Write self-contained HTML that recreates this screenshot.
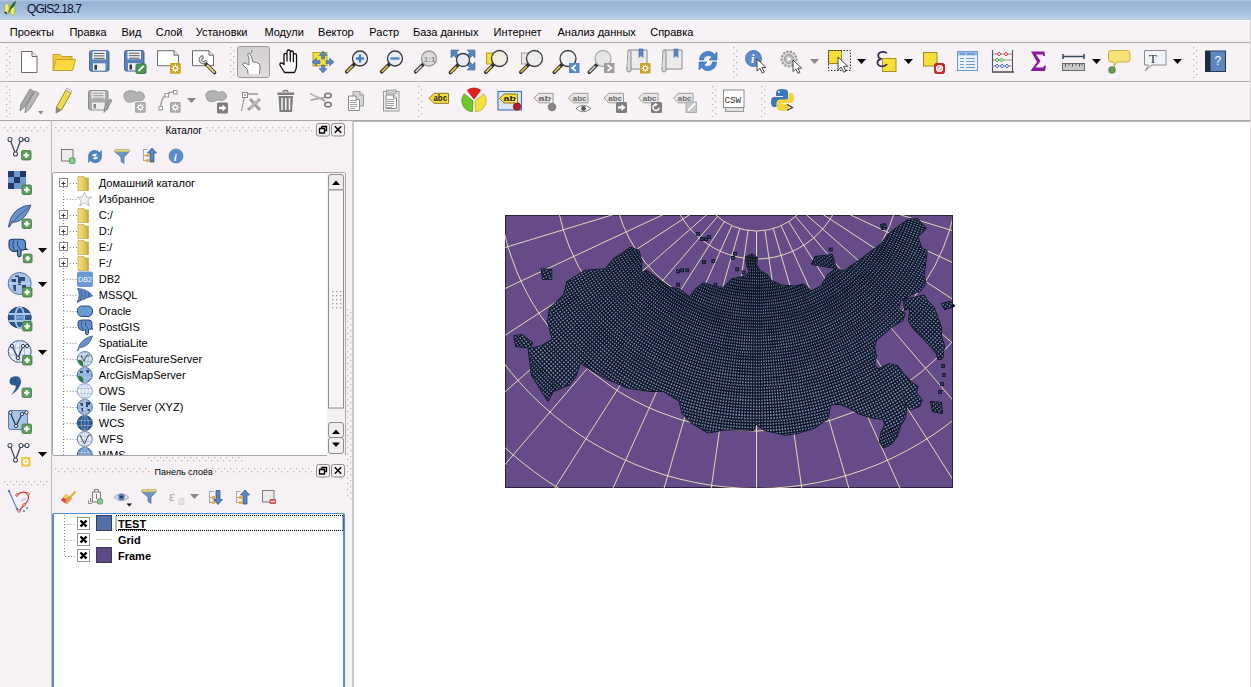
<!DOCTYPE html><html><head><meta charset="utf-8"><style>html,body{margin:0;padding:0;overflow:hidden;width:1251px;height:687px;background:#f6f1f5;position:relative}</style></head><body>
<div style="position:absolute;left:0px;top:0px;width:1251px;height:20px;background:linear-gradient(#b4c9e3 0px,#97b1d2 2px,#a3bcdc 10px,#b7d1ea 19px)"></div>
<svg style="position:absolute;left:0;top:0" width="24" height="20"><ellipse cx="6.8" cy="8.5" rx="2.3" ry="5" fill="#f0f070" stroke="#8a9a30" stroke-width="0.6"/><ellipse cx="12.6" cy="9.8" rx="2.3" ry="5.3" fill="#e8f060" stroke="#8a9a30" stroke-width="0.6"/><path d="M8,14 Q10,6 14,2 Q15.5,0.8 16,1.5 Q15,6 11,9 Q9.5,12 8,14Z" fill="#1f6a2a"/><path d="M4,12.5 L7,14.5 L6.5,11.5Z" fill="#1a2a1a"/></svg>
<div style="position:absolute;left:27px;top:3.14px;font-family:'Liberation Sans',sans-serif;font-size:12px;line-height:13.80px;white-space:nowrap;color:#000;color:#0a1030;letter-spacing:-0.95px">QGIS2.18.7</div>
<div style="position:absolute;left:0px;top:20px;width:1251px;height:1px;background:#ffffff"></div>
<div style="position:absolute;left:0px;top:21px;width:1251px;height:21px;background:#f7f2f6"></div>
<div style="position:absolute;left:0px;top:42px;width:1251px;height:1px;background:#aba7ab"></div>
<div style="position:absolute;left:9.8px;top:26.05px;font-family:'Liberation Sans',sans-serif;font-size:11px;line-height:12.65px;white-space:nowrap;color:#000;">Проекты</div>
<div style="position:absolute;left:69.4px;top:26.05px;font-family:'Liberation Sans',sans-serif;font-size:11px;line-height:12.65px;white-space:nowrap;color:#000;">Правка</div>
<div style="position:absolute;left:121.5px;top:26.05px;font-family:'Liberation Sans',sans-serif;font-size:11px;line-height:12.65px;white-space:nowrap;color:#000;">Вид</div>
<div style="position:absolute;left:155.7px;top:26.05px;font-family:'Liberation Sans',sans-serif;font-size:11px;line-height:12.65px;white-space:nowrap;color:#000;">Слой</div>
<div style="position:absolute;left:195.7px;top:26.05px;font-family:'Liberation Sans',sans-serif;font-size:11px;line-height:12.65px;white-space:nowrap;color:#000;">Установки</div>
<div style="position:absolute;left:264.4px;top:26.05px;font-family:'Liberation Sans',sans-serif;font-size:11px;line-height:12.65px;white-space:nowrap;color:#000;">Модули</div>
<div style="position:absolute;left:318.1px;top:26.05px;font-family:'Liberation Sans',sans-serif;font-size:11px;line-height:12.65px;white-space:nowrap;color:#000;">Вектор</div>
<div style="position:absolute;left:369.3px;top:26.05px;font-family:'Liberation Sans',sans-serif;font-size:11px;line-height:12.65px;white-space:nowrap;color:#000;">Растр</div>
<div style="position:absolute;left:413px;top:26.05px;font-family:'Liberation Sans',sans-serif;font-size:11px;line-height:12.65px;white-space:nowrap;color:#000;">База данных</div>
<div style="position:absolute;left:493.5px;top:26.05px;font-family:'Liberation Sans',sans-serif;font-size:11px;line-height:12.65px;white-space:nowrap;color:#000;">Интернет</div>
<div style="position:absolute;left:557.5px;top:26.05px;font-family:'Liberation Sans',sans-serif;font-size:11px;line-height:12.65px;white-space:nowrap;color:#000;">Анализ данных</div>
<div style="position:absolute;left:650.2px;top:26.05px;font-family:'Liberation Sans',sans-serif;font-size:11px;line-height:12.65px;white-space:nowrap;color:#000;">Справка</div>
<div style="position:absolute;left:0px;top:43px;width:1251px;height:38px;background:#f7f2f6"></div>
<div style="position:absolute;left:0px;top:81px;width:1251px;height:1px;background:#b3afb3"></div>
<div style="position:absolute;left:0px;top:82px;width:1251px;height:38px;background:#f7f2f6"></div>
<div style="position:absolute;left:0px;top:120px;width:1251px;height:1px;background:#a9a5a9"></div>
<div style="position:absolute;left:1250px;top:20px;width:1px;height:667px;background:#d6d2d6"></div>
<svg style="position:absolute;left:6px;top:47px" width="5" height="31"><defs><pattern id="dv6_47" width="5" height="6" patternUnits="userSpaceOnUse"><rect x="0" y="0" width="1.3" height="1.3" fill="#b9b5b9"/><rect x="3" y="3" width="1.3" height="1.3" fill="#b9b5b9"/></pattern></defs><rect width="5" height="31" fill="url(#dv6_47)"/></svg>
<svg style="position:absolute;left:230px;top:47px" width="5" height="31"><defs><pattern id="dv230_47" width="5" height="6" patternUnits="userSpaceOnUse"><rect x="0" y="0" width="1.3" height="1.3" fill="#b9b5b9"/><rect x="3" y="3" width="1.3" height="1.3" fill="#b9b5b9"/></pattern></defs><rect width="5" height="31" fill="url(#dv230_47)"/></svg>
<div style="position:absolute;left:236.5px;top:46px;width:33px;height:32px;background:linear-gradient(#d3d0d3,#dedade);border:1px solid #9d999d;border-radius:3px;box-sizing:border-box"></div>
<svg style="position:absolute;left:733px;top:47px" width="5" height="31"><defs><pattern id="dv733_47" width="5" height="6" patternUnits="userSpaceOnUse"><rect x="0" y="0" width="1.3" height="1.3" fill="#b9b5b9"/><rect x="3" y="3" width="1.3" height="1.3" fill="#b9b5b9"/></pattern></defs><rect width="5" height="31" fill="url(#dv733_47)"/></svg>
<svg style="position:absolute;left:810px;top:59px" width="9" height="5"><path d="M0,0 H9 L4.5,5Z" fill="#8a868a"/></svg>
<svg style="position:absolute;left:857px;top:59px" width="9" height="5"><path d="M0,0 H9 L4.5,5Z" fill="#000"/></svg>
<svg style="position:absolute;left:904px;top:59px" width="9" height="5"><path d="M0,0 H9 L4.5,5Z" fill="#000"/></svg>
<svg style="position:absolute;left:1091.5px;top:59px" width="9" height="5"><path d="M0,0 H9 L4.5,5Z" fill="#000"/></svg>
<svg style="position:absolute;left:1173px;top:59px" width="9" height="5"><path d="M0,0 H9 L4.5,5Z" fill="#000"/></svg>
<svg style="position:absolute;left:1193px;top:47px" width="5" height="31"><defs><pattern id="dv1193_47" width="5" height="6" patternUnits="userSpaceOnUse"><rect x="0" y="0" width="1.3" height="1.3" fill="#b9b5b9"/><rect x="3" y="3" width="1.3" height="1.3" fill="#b9b5b9"/></pattern></defs><rect width="5" height="31" fill="url(#dv1193_47)"/></svg>
<svg style="position:absolute;left:6px;top:86px" width="5" height="31"><defs><pattern id="dv6_86" width="5" height="6" patternUnits="userSpaceOnUse"><rect x="0" y="0" width="1.3" height="1.3" fill="#b9b5b9"/><rect x="3" y="3" width="1.3" height="1.3" fill="#b9b5b9"/></pattern></defs><rect width="5" height="31" fill="url(#dv6_86)"/></svg>
<svg style="position:absolute;left:38px;top:111px" width="5.5" height="3.5"><path d="M0,0 H5.5 L2.75,3.5Z" fill="#8a868a"/></svg>
<svg style="position:absolute;left:187px;top:98px" width="9" height="5"><path d="M0,0 H9 L4.5,5Z" fill="#8a868a"/></svg>
<svg style="position:absolute;left:418px;top:86px" width="5" height="31"><defs><pattern id="dv418_86" width="5" height="6" patternUnits="userSpaceOnUse"><rect x="0" y="0" width="1.3" height="1.3" fill="#b9b5b9"/><rect x="3" y="3" width="1.3" height="1.3" fill="#b9b5b9"/></pattern></defs><rect width="5" height="31" fill="url(#dv418_86)"/></svg>
<svg style="position:absolute;left:712px;top:86px" width="5" height="31"><defs><pattern id="dv712_86" width="5" height="6" patternUnits="userSpaceOnUse"><rect x="0" y="0" width="1.3" height="1.3" fill="#b9b5b9"/><rect x="3" y="3" width="1.3" height="1.3" fill="#b9b5b9"/></pattern></defs><rect width="5" height="31" fill="url(#dv712_86)"/></svg>
<svg style="position:absolute;left:761px;top:86px" width="5" height="31"><defs><pattern id="dv761_86" width="5" height="6" patternUnits="userSpaceOnUse"><rect x="0" y="0" width="1.3" height="1.3" fill="#b9b5b9"/><rect x="3" y="3" width="1.3" height="1.3" fill="#b9b5b9"/></pattern></defs><rect width="5" height="31" fill="url(#dv761_86)"/></svg>
<svg style="position:absolute;left:0;top:0" width="1251" height="125"><g transform="translate(20,49)"><path d="M1.5,2.5H12.0L17.0,7.5V23.5H1.5Z" fill="#fff" stroke="#6b6b6b"/><path d="M12.0,2.5V7.5H17.0" fill="#e8e8e8" stroke="#6b6b6b"/></g><g transform="translate(52,49)"><path d="M1,21.5V5.5h7l2,2h10v4" fill="#efca36" stroke="#c4a12c"/><path d="M1,21.5L4,10.5H23.5L20.5,21.5Z" fill="#fbd83e" stroke="#c4a12c"/></g><g transform="translate(88,49)"><rect x="1.5" y="1.7" width="19.5" height="20.5" rx="2" fill="#5b82b6" stroke="#45679a"/><rect x="4.5" y="2.2" width="13.5" height="8.2" fill="#f4f4f4"/><path d="M6,4.4h10.5M6,6.9h10.5M6,9.399999999999999h10.5" stroke="#555" stroke-width="1"/><rect x="5" y="14.3" width="12.5" height="7.4" fill="#eceff2"/><rect x="6.5" y="15.8" width="2.5" height="4.9" fill="#333"/></g><g transform="translate(123,49)"><rect x="1.5" y="1.5" width="19.5" height="20.5" rx="2" fill="#5b82b6" stroke="#45679a"/><rect x="4.5" y="2" width="13.5" height="8.2" fill="#f4f4f4"/><path d="M6,4.2h10.5M6,6.7h10.5M6,9.2h10.5" stroke="#555" stroke-width="1"/><rect x="5" y="14.1" width="12.5" height="7.4" fill="#eceff2"/><rect x="6.5" y="15.6" width="2.5" height="4.9" fill="#333"/><rect x="13" y="15" width="10" height="9.5" rx="1.5" fill="#4f9457" stroke="#3d7a45"/><path d="M15.5,22 L20.8,16.8" stroke="#fff" stroke-width="1.8"/></g><g transform="translate(156,49)"><path d="M1.5,1.7H18L22.5,6.2V16.7H1.5Z" fill="#fff" stroke="#6b6b6b"/><path d="M18,1.7V6.2H22.5" fill="#e8e8e8" stroke="#6b6b6b"/><rect x="14" y="14" width="10.7" height="10.7" rx="1.2" fill="#c9a41e"/><circle cx="19.35" cy="19.35" r="2" fill="none" stroke="#fff" stroke-width="1.1"/><path d="M19.35,15.5v2M19.35,23.2v-2M15.5,19.35h2M23.2,19.35h-2M16.5,16.5l1.4,1.4M22.2,22.2l-1.4,-1.4M22.2,16.5l-1.4,1.4M16.5,22.2l1.4,-1.4" stroke="#fff" stroke-width="1"/></g><g transform="translate(191,49)"><path d="M1.5,1.7H18L22.5,6.2V16.7H1.5Z" fill="#fff" stroke="#6b6b6b"/><path d="M18,1.7V6.2H22.5" fill="#e8e8e8" stroke="#6b6b6b"/><path d="M15,15 L23.5,23.5" stroke="#333" stroke-width="3.6" stroke-linecap="round"/><path d="M16.5,16.5 L23,23" stroke="#e5d37a" stroke-width="2" stroke-linecap="round"/><path d="M16,12.5 A4.2,4.2 0 1,1 11.5,6.5 L12.5,9 A1.8,1.8 0 1,0 14.5,11 Z" fill="#ddd" stroke="#555" stroke-width="0.9"/></g><g transform="translate(240,49)"><path d="M8,25 L7.5,20.5 L2.5,15.5 L4,13.5 L9,16 L9,9 L7.5,5 L9.5,4 L11.5,8 L13,13 L16.5,13.5 L19.5,15 L20,19 L19.5,25" fill="#fff" stroke="#7a7a7a" stroke-width="1"/><path d="M5,13 L2.5,16 M11,4 L12.5,1" stroke="#777" stroke-width="0.9"/></g><g transform="translate(278,49)"><path d="M6.5,23.5 L2.5,17 Q1,14.5 3,14 Q4.5,13.8 6,15.5 V6 Q6,4.3 7.5,4.3 Q9,4.3 9,6 V12 V2.8 Q9,1 10.7,1 Q12.3,1 12.3,2.8 V12 V3.5 Q12.3,2 13.8,2 Q15.4,2 15.4,3.5 V12.5 V6 Q15.4,4.6 16.9,4.6 Q18.5,4.6 18.5,6 V16.5 Q18.5,20.5 16.5,23.5Z" fill="#fff" stroke="#111" stroke-width="1.3" stroke-linejoin="round"/></g><g transform="translate(311,49)"><rect x="2" y="3.5" width="14" height="13.5" fill="#f7df3a" stroke="#b59c25"/><g fill="#5a87c4" stroke="#41689c" stroke-width="0.6"><path d="M12,2 L16,6.5 H13.5 V10 H10.5 V6.5 H8Z"/><path d="M12,24 L16,19.5 H13.5 V16 H10.5 V19.5 H8Z"/><path d="M1,13 L5.5,9 V11.5 H9 V14.5 H5.5 V17Z"/><path d="M23,13 L18.5,9 V11.5 H15 V14.5 H18.5 V17Z"/></g></g><g transform="translate(345,49)"><path d="M9.7,14.8 L1.7,22.8" stroke="#2a2a2a" stroke-width="3.6" stroke-linecap="round"/><path d="M7.2,17.3 L2.2,22.3" stroke="#e3c54a" stroke-width="1.8" stroke-linecap="round"/><circle cx="15" cy="9.5" r="7.5" fill="#e8ecf0" stroke="#3a3a3a" stroke-width="1.3"/><path d="M11,9.5h8M15,5.5v8" stroke="#4a7cc0" stroke-width="2.3"/></g><g transform="translate(380,49)"><path d="M9.7,14.8 L1.7,22.8" stroke="#2a2a2a" stroke-width="3.6" stroke-linecap="round"/><path d="M7.2,17.3 L2.2,22.3" stroke="#e3c54a" stroke-width="1.8" stroke-linecap="round"/><circle cx="15" cy="9.5" r="7.5" fill="#e8ecf0" stroke="#3a3a3a" stroke-width="1.3"/><path d="M10.5,9.5h9" stroke="#4a7cc0" stroke-width="2.3"/></g><g transform="translate(414,49)"><path d="M9.7,14.8 L1.7,22.8" stroke="#2a2a2a" stroke-width="3.6" stroke-linecap="round"/><path d="M7.2,17.3 L2.2,22.3" stroke="#cfcfcf" stroke-width="1.8" stroke-linecap="round"/><circle cx="15" cy="9.5" r="7.5" fill="#dcdcdc" stroke="#9a9a9a" stroke-width="1.3"/><text x="9.8" y="12.5" font-family="Liberation Sans" font-weight="bold" font-size="8" fill="#8a8a8a">1:1</text></g><g transform="translate(450,49)"><g fill="#5a87c4" stroke="#3f6aa4" stroke-width="0.6"><path d="M1,1h8l-2.5,2.5l3,3l-3,3l-3,-3l-2.5,2.5z"/><path d="M25,1h-8l2.5,2.5l-3,3l3,3l3,-3l2.5,2.5z"/><path d="M25,21h-8l2.5,-2.5l-3,-3l3,-3l3,3l2.5,-2.5z"/></g><path d="M8.4,15.6 L0.4,23.6" stroke="#2a2a2a" stroke-width="3.6" stroke-linecap="round"/><path d="M5.9,18.1 L0.9,23.1" stroke="#e3c54a" stroke-width="1.8" stroke-linecap="round"/><circle cx="13" cy="11" r="6.5" fill="#e8ecf0" stroke="#3a3a3a" stroke-width="1.3"/></g><g transform="translate(485,49)"><rect x="1.5" y="4" width="8" height="11" fill="#f7df3a" stroke="#b59c25"/><path d="M8.8,15.2 L0.8,23.2" stroke="#2a2a2a" stroke-width="3.6" stroke-linecap="round"/><path d="M6.3,17.7 L1.3,22.7" stroke="#e3c54a" stroke-width="1.8" stroke-linecap="round"/><circle cx="14.5" cy="9.5" r="8" fill="#efeee0" stroke="#3a3a3a" stroke-width="1.3"/></g><g transform="translate(520,49)"><rect x="1.5" y="4" width="8" height="11" fill="#e8e8e8" stroke="#9a9a9a"/><path d="M8.8,15.2 L0.8,23.2" stroke="#2a2a2a" stroke-width="3.6" stroke-linecap="round"/><path d="M6.3,17.7 L1.3,22.7" stroke="#e3c54a" stroke-width="1.8" stroke-linecap="round"/><circle cx="14.5" cy="9.5" r="8" fill="#ececec" stroke="#3a3a3a" stroke-width="1.3"/></g><g transform="translate(555,49)"><path d="M7.3,15.2 L-0.7,23.2" stroke="#2a2a2a" stroke-width="3.6" stroke-linecap="round"/><path d="M4.8,17.7 L-0.2,22.7" stroke="#e3c54a" stroke-width="1.8" stroke-linecap="round"/><circle cx="13" cy="9.5" r="8" fill="#eef0f2" stroke="#3a3a3a" stroke-width="1.3"/><rect x="14" y="14" width="10.5" height="10" fill="#5a87c4"/><path d="M21,16 L17,19 L21,22" fill="none" stroke="#fff" stroke-width="1.6"/></g><g transform="translate(590,49)"><path d="M7.3,15.2 L-0.7,23.2" stroke="#2a2a2a" stroke-width="3.6" stroke-linecap="round"/><path d="M4.8,17.7 L-0.2,22.7" stroke="#d0d0d0" stroke-width="1.8" stroke-linecap="round"/><circle cx="13" cy="9.5" r="8" fill="#e6e6e6" stroke="#a8a8a8" stroke-width="1.3"/><rect x="14" y="14" width="10.5" height="10" fill="#9c9c9c"/><path d="M17.5,16 L21.5,19 L17.5,22" fill="none" stroke="#fff" stroke-width="1.6"/></g><g transform="translate(626,49)"><path d="M2,3 Q1,1 3,1 H21 V20 H4 Q1,20 1,18Z" fill="#ebebeb" stroke="#8a8a8a"/><path d="M3,1 Q5,1 5,3 V21 Q5,23 3,23 Q1,23 1,21 V18" fill="#dcdcdc" stroke="#8a8a8a"/><path d="M13,0 h4 v8.5 l-2,-2 l-2,2z" fill="#5a87c4" stroke="#3f6aa4" stroke-width="0.6"/><rect x="14" y="14" width="10.5" height="10.5" rx="1.2" fill="#c9a41e"/><circle cx="19.25" cy="19.25" r="2" fill="none" stroke="#fff" stroke-width="1.1"/><path d="M19.25,15.5v2M19.25,23.0v-2M15.5,19.25h2M23.0,19.25h-2M16.5,16.5l1.4,1.4M22.0,22.0l-1.4,-1.4M22.0,16.5l-1.4,1.4M16.5,22.0l1.4,-1.4" stroke="#fff" stroke-width="1"/></g><g transform="translate(661,49)"><path d="M2,3 Q1,1 3,1 H21 V20 H4 Q1,20 1,18Z" fill="#ebebeb" stroke="#8a8a8a"/><path d="M3,1 Q5,1 5,3 V21 Q5,23 3,23 Q1,23 1,21 V18" fill="#dcdcdc" stroke="#8a8a8a"/><path d="M13,0 h4 v8.5 l-2,-2 l-2,2z" fill="#5a87c4" stroke="#3f6aa4" stroke-width="0.6"/></g><g transform="translate(696,49)"><path d="M3.5,11 A8.5,8.5 0 0,1 18.5,5.5 L21,3 V11 H13 L16,8 A5,5 0 0,0 7.5,11Z" fill="#4a86cc" stroke="#356aa8" stroke-width="0.6"/><path d="M20.5,13 A8.5,8.5 0 0,1 5.5,18.5 L3,21 V13 H11 L8,16 A5,5 0 0,0 16.5,13Z" fill="#4a86cc" stroke="#356aa8" stroke-width="0.6"/></g><g transform="translate(744,49)"><circle cx="9.5" cy="9.5" r="8" fill="#5b8bc9" stroke="#3f6aa4" stroke-width="0.8"/><text x="7" y="14" font-family="Liberation Serif" font-style="italic" font-weight="bold" font-size="12" fill="#fff">i</text><path d="M13,10 l0,12.100000000000001 l2.8600000000000003,-2.75 l2.4200000000000004,4.620000000000001 l1.9800000000000002,-0.9900000000000001 l-2.3100000000000005,-4.51 l3.9600000000000004,0z" fill="#fff" stroke="#333" stroke-width="0.9" stroke-linejoin="round"/></g><g transform="translate(779,49)"><circle cx="10" cy="10" r="7.5" fill="#d8d8d8" stroke="#9a9a9a" stroke-width="2.2" stroke-dasharray="2.2,1.4"/><circle cx="10" cy="10" r="4.5" fill="#bdbdbd" stroke="#9a9a9a"/><path d="M8.5,7.5 L12.5,10 L8.5,12.5z" fill="#fff"/><path d="M14,11 l0,11.55 l2.7300000000000004,-2.625 l2.3100000000000005,4.41 l1.8900000000000001,-0.9450000000000001 l-2.205,-4.305 l3.7800000000000002,0z" fill="#fff" stroke="#333" stroke-width="0.9" stroke-linejoin="round"/></g><g transform="translate(827,49)"><rect x="1.5" y="1.5" width="13" height="13" fill="#f7df3a" stroke="#9a8a2a"/><rect x="1.5" y="1.5" width="22" height="20" fill="none" stroke="#333" stroke-dasharray="1.5,1.5"/><rect x="15" y="2" width="8" height="19" fill="#e6e6e6" opacity="0.6"/><rect x="2" y="15" width="21" height="6" fill="#e6e6e6" opacity="0.6"/><path d="M11,8 l0,13.2 l3.12,-3.0 l2.64,5.04 l2.16,-1.08 l-2.52,-4.919999999999999 l4.32,0z" fill="#fff" stroke="#333" stroke-width="0.9" stroke-linejoin="round"/></g><g transform="translate(876,49)"><rect x="6.5" y="9.5" width="13.5" height="13" fill="#f7df3a" stroke="#a8902a"/><path d="M10.8,4.2 Q9.5,2.6 6.5,2.8 Q2,3.3 2.2,7 Q2.4,9.5 5.5,10 Q1.3,10.6 1.5,14 Q1.8,17.3 6,17.3 Q9.5,17.3 11,15.2" fill="none" stroke="#3c2a50" stroke-width="1.8"/></g><g transform="translate(921,49)"><rect x="2.5" y="3.5" width="13.5" height="13.5" fill="#f7df3a" stroke="#9a8a2a"/><rect x="13.5" y="14.5" width="10" height="10" rx="1.8" fill="#d62a2a" stroke="#a01818" stroke-width="0.8"/><circle cx="18.5" cy="19.5" r="3" fill="#e8a0a0" stroke="#fff" stroke-width="1.1"/><path d="M16.5,21.5 L20.5,17.5" stroke="#fff" stroke-width="1.2"/></g><g transform="translate(956,49)"><rect x="1.5" y="2.5" width="20" height="19" fill="#eaf2fb" stroke="#6a9ad2"/><rect x="2" y="3" width="19" height="3.5" fill="#9cc0ea"/><path d="M4,5h5M11,5h8" stroke="#4a7ab8" stroke-width="1.2"/><path d="M4,9.5h4M10,9.5h9M4,12.5h4M10,12.5h9M4,15.5h4M10,15.5h9M4,18.5h4M10,18.5h9" stroke="#6a8cb8" stroke-width="0.9"/></g><g transform="translate(991,49)"><path d="M1.5,23 V1 M21.5,23 V1" stroke="#555" stroke-width="1.1"/><path d="M1,23h22" stroke="#555" stroke-width="1.6"/><path d="M1.5,5h20M1.5,11h20M1.5,17h20" stroke="#777" stroke-width="0.8"/><g fill="#f3c6c6" stroke="#d04040" stroke-width="0.9"><path d="M6,5 l2,-2 l2,2 l-2,2z"/><path d="M13,5 l2,-2 l2,2 l-2,2z"/></g><g fill="#c6ecc6" stroke="#40a040" stroke-width="0.9"><path d="M4,11 l2,-2 l2,2 l-2,2z"/><path d="M8.5,11 l2,-2 l2,2 l-2,2z"/></g><g fill="#c6d8f3" stroke="#4070c0" stroke-width="0.9"><path d="M4,17 l2,-2 l2,2 l-2,2z"/><path d="M9,17 l2,-2 l2,2 l-2,2z"/><path d="M14,17 l2,-2 l2,2 l-2,2z"/></g></g><g transform="translate(1026,49)"><path d="M5,2.5 H18.5 L19,7 H17.5 L16.5,5.5 H10 L14.5,12 L9.5,18.5 H17 L18.5,16.5 H20 L19,22 H4.5 L11,13 Z" fill="#8a1aa0"/></g><g transform="translate(1061,49)"><path d="M2,7.5 H23 M2,5 V10 M23,5 V10" stroke="#3c4a60" stroke-width="1.6"/><rect x="1.5" y="14.5" width="22" height="7" fill="#c8c8c8" stroke="#6a6a6a"/><path d="M4.5,14.5v3M8,14.5v2M11.5,14.5v3M15,14.5v2M18.5,14.5v3M21,14.5v2" stroke="#4a4a4a" stroke-width="0.9"/></g><g transform="translate(1107,49)"><path d="M4,1.5 H20 Q23,1.5 23,4.5 V10 Q23,13 20,13 H10 L7,18 V13 H4 Q1.5,13 1.5,10 V4.5 Q1.5,1.5 4,1.5Z" fill="#f8e27a" stroke="#c7b040"/><circle cx="5" cy="21" r="3.3" fill="#6a9a5a" stroke="#4a7a3a" stroke-width="0.8"/></g><g transform="translate(1143,49)"><path d="M1.5,1.5 H23 V16 H9 L2.5,21.5 L5.5,16 H1.5Z" fill="#f0f4f8" stroke="#8a8a8a"/><text x="6" y="14" font-family="Liberation Serif" font-size="13" fill="#333">T</text></g><g transform="translate(1204,49)"><rect x="1.5" y="2" width="20" height="20.5" fill="#5b86c0" stroke="#2a3a55"/><rect x="1.5" y="2" width="5" height="20.5" fill="#1e2a3e"/><text x="10.5" y="16" font-family="Liberation Sans" font-size="12" fill="#fff">?</text></g><g transform="translate(18,87)"><g stroke="#7a7a7a" stroke-width="0.8"><path d="M2,24 L3,17 L12,2 L16,4.5 L7,19.5Z" fill="#a8a8a8"/><path d="M7,26 L8,19 L17,4 L21,6.5 L12,21.5Z" fill="#b8b8b8"/></g></g><g transform="translate(50,87)"><path d="M6,26 L6.5,20 L16,3 L21,6 L11.5,23Z" fill="#f0de48" stroke="#8a8024" stroke-width="0.9"/><path d="M6,26 L6.5,20 L11.5,23Z" fill="#888"/><path d="M16,3 L21,6 L22,4 L17,1Z" fill="#eee" stroke="#999" stroke-width="0.7"/></g><g transform="translate(85,87)"><rect x="3.5" y="3.5" width="19.5" height="19.5" rx="2" fill="#a9a9a9" stroke="#8a8a8a"/><rect x="6.5" y="4" width="13.5" height="7.8" fill="#e6e6e6"/><path d="M8,6.2h10.5M8,8.7h10.5M8,11.2h10.5" stroke="#999" stroke-width="1"/><rect x="7" y="15.5" width="12.5" height="7.0" fill="#eceff2"/><rect x="8.5" y="17.0" width="2.5" height="4.5" fill="#888"/><path d="M19,25.5 L19.5,21 L25,12 L27,13.5 L21.5,22.5Z" fill="#aaa" stroke="#7a7a7a" stroke-width="0.8"/></g><g transform="translate(119,87)"><path d="M5,8.600000000000001 C4,3.2 15.0,2.7 17.64,5.6000000000000005 C22.7,2.9000000000000004 26.5,7.3999999999999995 25,11.599999999999998 C21.6,15.8 18.3,12.2 15.0,14.0 C9.5,16.400000000000002 5.5,15.2 5,8.600000000000001Z" fill="#b3b3b3" stroke="#999"/><rect x="16" y="15" width="10.7" height="10.7" rx="1.2" fill="#a9a9a9"/><circle cx="21.35" cy="20.35" r="2" fill="none" stroke="#fff" stroke-width="1.1"/><path d="M21.35,16.5v2M21.35,24.2v-2M17.5,20.35h2M25.2,20.35h-2M18.5,17.5l1.4,1.4M24.2,23.2l-1.4,-1.4M24.2,17.5l-1.4,1.4M18.5,23.2l1.4,-1.4" stroke="#fff" stroke-width="1"/></g><g transform="translate(153,87)"><path d="M7.5,22 Q8,10 14,7 Q18,5 22,4.5" fill="none" stroke="#a0a0a0" stroke-width="1.4"/><g fill="#fff" stroke="#999"><rect x="6" y="19.5" width="3.5" height="3.5"/><rect x="12" y="6.5" width="3.5" height="3.5"/><rect x="20.5" y="3.5" width="3.5" height="3.5"/></g><rect x="17" y="15" width="10.7" height="10.7" rx="1.2" fill="#a9a9a9"/><circle cx="22.35" cy="20.35" r="2" fill="none" stroke="#fff" stroke-width="1.1"/><path d="M22.35,16.5v2M22.35,24.2v-2M18.5,20.35h2M26.2,20.35h-2M19.5,17.5l1.4,1.4M25.2,23.2l-1.4,-1.4M25.2,17.5l-1.4,1.4M19.5,23.2l1.4,-1.4" stroke="#fff" stroke-width="1"/></g><g transform="translate(203,87)"><path d="M3,8.375 C2,3.2 13.0,2.7 15.64,5.5 C20.7,2.9000000000000004 24.5,7.225 23,11.25 C19.6,15.275000000000002 16.3,11.825 13.0,13.55 C7.5,15.850000000000001 3.5,14.7 3,8.375Z" fill="#b3b3b3" stroke="#999"/><rect x="14" y="15.5" width="11" height="11" rx="1.5" fill="#7d7d7d"/><path d="M16,19.8h3.5v-2.3l4,3.5l-4,3.5v-2.3h-3.5z" fill="#fff"/></g><g transform="translate(239,87)"><path d="M2.5,24 L5.5,9" stroke="#8a8a8a" stroke-width="1"/><rect x="3.5" y="5.5" width="5" height="5" fill="#fff" stroke="#8a8a8a"/><circle cx="6" cy="8" r="1" fill="#8a8a8a"/><path d="M9,7h10" stroke="#8a8a8a" stroke-width="1.3"/><path d="M9,23 L21,12 M11,12 L21,23" stroke="#a0a0a0" stroke-width="3"/><path d="M11,21 L19,13" stroke="#c8c8c8" stroke-width="1.2"/></g><g transform="translate(273,87)"><path d="M10,5 Q10,3.5 12.5,3.5 Q15,3.5 15,5" fill="none" stroke="#7a7a7a" stroke-width="1.3"/><rect x="4.5" y="5.5" width="16.5" height="2.5" fill="#7d7d7d"/><path d="M5.5,9 H20 L19,25 H6.5Z" fill="#7d7d7d"/><path d="M9,11v12M12.75,11v12M16.5,11v12" stroke="#f3f3f3" stroke-width="1.6"/></g><g transform="translate(308,87)"><path d="M2,6.5 L17,14 M2.5,13 L17,10.5" stroke="#9a9a9a" stroke-width="1.6"/><path d="M2,6.5 L14,12.5" stroke="#d8d8d8" stroke-width="0.7"/><ellipse cx="20" cy="8.5" rx="3.2" ry="2.3" fill="none" stroke="#7a7a7a" stroke-width="1.6"/><ellipse cx="20" cy="17.5" rx="3.2" ry="2.3" fill="none" stroke="#7a7a7a" stroke-width="1.6"/></g><g transform="translate(344,87)"><path d="M9.0,4.5H16.0L19.5,8V19.0H9.0Z" fill="#d5d5d5" stroke="#9a9a9a"/><path d="M16.0,4.5V8H19.5" fill="#e8e8e8" stroke="#9a9a9a"/><path d="M4.5,9.0H12L15.5,12.5V23.5H4.5Z" fill="#fff" stroke="#8a8a8a"/><path d="M12,9.0V12.5H15.5" fill="#e8e8e8" stroke="#8a8a8a"/><path d="M6,13.5h7M6,15.5h7M6,17.5h7M6,19.5h7M6,21.5h5" stroke="#a0a0a0" stroke-width="1"/></g><g transform="translate(379,87)"><rect x="4.5" y="4.5" width="15.5" height="19.5" fill="#eee" stroke="#9a9a9a"/><rect x="7.5" y="3" width="9.5" height="4" fill="#ccc" stroke="#999" stroke-width="0.8"/><path d="M7.0,8.0H14.5L17.5,11.0V21.5H7.0Z" fill="#fff" stroke="#8a8a8a"/><path d="M14.5,8.0V11.0H17.5" fill="#e8e8e8" stroke="#8a8a8a"/><path d="M8,12.5h7M8,14.5h7M8,16.5h7M8,18.5h7M8,20.5h5" stroke="#a0a0a0" stroke-width="1"/></g><g transform="translate(427,87)"><path d="M2.0,11.3 L7.0,6.3 H21.5 V16.3 H7.0Z" fill="#f6dc3c" stroke="#8d7b1c"/><text x="6.5" y="14.4" font-family="Liberation Sans" font-weight="bold" font-size="8.5" textLength="13.5" lengthAdjust="spacingAndGlyphs" fill="#222">abc</text></g><g transform="translate(462,87)"><path d="M12.00,12.00 L5.23,3.33 A11,11 0 0,1 18.77,3.33Z" fill="#e32020" stroke="#a01010" stroke-width="0.7"/><path d="M10.91,13.71 L10.53,24.70 A11,11 0 0,1 2.24,6.93Z" fill="#6ec82a" stroke="#4a8a18" stroke-width="0.7"/><path d="M13.09,13.71 L21.76,6.93 A11,11 0 0,1 13.47,24.70Z" fill="#f5e03a" stroke="#c0a018" stroke-width="0.7"/></g><g transform="translate(497,87)"><rect x="1" y="4.5" width="23.5" height="18.5" fill="#dce6f4" stroke="#3d6fc0" stroke-width="1.1"/><path d="M2.5,11.5 L7.0,7.0 H20.5 V16.0 H7.0Z" fill="#f6dc3c" stroke="#8d7b1c"/><text x="6.5" y="14.1" font-family="Liberation Sans" font-weight="bold" font-size="8" textLength="12.5" lengthAdjust="spacingAndGlyphs" fill="#222">ab</text><circle cx="20" cy="19.5" r="3.8" fill="#b01c28" stroke="#7a1018" stroke-width="0.6"/><path d="M19,16 V12" stroke="#eee" stroke-width="1.4"/></g><g transform="translate(533,87)"><path d="M1.0,11.05 L5.75,6.3 H20.0 V15.8 H5.75Z" fill="#e8e8e8" stroke="#9a9a9a"/><text x="5.25" y="13.9" font-family="Liberation Sans" font-weight="bold" font-size="8" textLength="13.25" lengthAdjust="spacingAndGlyphs" fill="#6a6a6a">ab</text><circle cx="19" cy="20" r="4.3" fill="#858585"/><path d="M18,16 V12" stroke="#eee" stroke-width="1.4"/></g><g transform="translate(567,87)"><path d="M1.5,11.05 L6.25,6.3 H21.0 V15.8 H6.25Z" fill="#e8e8e8" stroke="#9a9a9a"/><text x="5.75" y="13.9" font-family="Liberation Sans" font-weight="bold" font-size="8" textLength="13.75" lengthAdjust="spacingAndGlyphs" fill="#6a6a6a">abc</text><path d="M9,21.5 Q16,15 24,21.5 Q16,28 9,21.5Z" fill="#fff" stroke="#777" stroke-width="0.9"/><circle cx="16.5" cy="21.5" r="2.4" fill="#555"/></g><g transform="translate(603,87)"><path d="M1.0,11.05 L5.75,6.3 H20.5 V15.8 H5.75Z" fill="#e8e8e8" stroke="#9a9a9a"/><text x="5.25" y="13.9" font-family="Liberation Sans" font-weight="bold" font-size="8" textLength="13.75" lengthAdjust="spacingAndGlyphs" fill="#6a6a6a">abc</text><rect x="13" y="15" width="11" height="11" rx="1.5" fill="#7d7d7d"/><path d="M15,19.3h3.5v-2.3l4,3.5l-4,3.5v-2.3h-3.5z" fill="#fff"/></g><g transform="translate(638,87)"><path d="M0.5,11.05 L5.25,6.3 H20.0 V15.8 H5.25Z" fill="#e8e8e8" stroke="#9a9a9a"/><text x="4.75" y="13.9" font-family="Liberation Sans" font-weight="bold" font-size="8" textLength="13.75" lengthAdjust="spacingAndGlyphs" fill="#6a6a6a">abc</text><rect x="13" y="15" width="11" height="11" rx="1.5" fill="#7d7d7d"/><path d="M21,20.5 A3,3 0 1,1 18.5,17.5" fill="none" stroke="#fff" stroke-width="1.5"/><path d="M17,15.8 L19.8,17.5 L17.3,19.5z" fill="#fff"/></g><g transform="translate(673,87)"><path d="M0.5,11.05 L5.25,6.3 H20.0 V15.8 H5.25Z" fill="#e8e8e8" stroke="#9a9a9a"/><text x="4.75" y="13.9" font-family="Liberation Sans" font-weight="bold" font-size="8" textLength="13.75" lengthAdjust="spacingAndGlyphs" fill="#6a6a6a">abc</text><rect x="13" y="15" width="10.5" height="10.5" fill="#c8c8c8" stroke="#a0a0a0" stroke-width="0.8"/><path d="M15,23.5 L22,16.5" stroke="#fff" stroke-width="1.8"/></g><g transform="translate(721,87)"><rect x="4.5" y="11.5" width="18" height="13" fill="#e0e0e0" stroke="#9a9a9a"/><rect x="2.5" y="3" width="20.5" height="17.5" fill="#fff" stroke="#8a8a8a"/><text x="3.6" y="15.5" font-family="Liberation Mono" font-size="9.2" fill="#333">CSW</text></g><g transform="translate(770,87)"><path d="M12,2 Q6,2 6,6 V9 H13 V10 H4 Q1,10 1,15 Q1,20 4,20 H6.5 V16.5 Q6.5,13.5 9.5,13.5 H15 Q18,13.5 18,11 V5 Q18,2 12,2Z" fill="#3a78b8"/><path d="M13,24 Q19,24 19,20 V17 H12 V16 H21 Q24,16 24,11 Q24,6 21,6 H18.5 V9.5 Q18.5,12.5 15.5,12.5 H10 Q7,12.5 7,15 V21 Q7,24 13,24Z" fill="#f5d43a"/><circle cx="9" cy="5" r="1" fill="#fff"/><path d="M17,17.5 L22.5,20.5 L17,23.5" fill="none" stroke="#444" stroke-width="1.3"/></g></svg>
<div style="position:absolute;left:51px;top:121px;width:1px;height:566px;background:#bdb9bd"></div>
<svg style="position:absolute;left:4px;top:127px" width="44" height="5"><defs><pattern id="dh4_127" width="6" height="5" patternUnits="userSpaceOnUse"><rect x="0" y="0" width="1.3" height="1.3" fill="#b9b5b9"/><rect x="3" y="3" width="1.3" height="1.3" fill="#b9b5b9"/></pattern></defs><rect width="44" height="5" fill="url(#dh4_127)"/></svg>
<svg style="position:absolute;left:38px;top:247.5px" width="9" height="5"><path d="M0,0 H9 L4.5,5Z" fill="#000"/></svg>
<svg style="position:absolute;left:38px;top:281.5px" width="9" height="5"><path d="M0,0 H9 L4.5,5Z" fill="#000"/></svg>
<svg style="position:absolute;left:38px;top:349.5px" width="9" height="5"><path d="M0,0 H9 L4.5,5Z" fill="#000"/></svg>
<svg style="position:absolute;left:38px;top:452px" width="9" height="5"><path d="M0,0 H9 L4.5,5Z" fill="#000"/></svg>
<svg style="position:absolute;left:4px;top:481px" width="44" height="5"><defs><pattern id="dh4_481" width="6" height="5" patternUnits="userSpaceOnUse"><rect x="0" y="0" width="1.3" height="1.3" fill="#b9b5b9"/><rect x="3" y="3" width="1.3" height="1.3" fill="#b9b5b9"/></pattern></defs><rect width="44" height="5" fill="url(#dh4_481)"/></svg>
<svg style="position:absolute;left:0;top:0" width="51" height="687"><g transform="translate(7,136)"><path d="M3,3.5 L8.5,18 L14,3.5 L20,3.5" fill="none" stroke="#3c4a5a" stroke-width="1.3"/><g fill="#fff" stroke="#3c4a5a" stroke-width="1.1"><circle cx="3" cy="3.5" r="2"/><circle cx="8.5" cy="18" r="2"/><circle cx="14" cy="3.5" r="2"/><circle cx="20" cy="3.5" r="2"/></g><rect x="14.5" y="14.5" width="9.5" height="9.5" rx="1.5" fill="#5d9e5d" stroke="#3f7a3f" stroke-width="0.8"/><path d="M19.25,16.5v5.5M16.5,19.25h5.5" stroke="#fff" stroke-width="2"/></g><g transform="translate(7,170)"><g><rect x="1" y="1" width="18" height="18" fill="#6e9ad0"/><rect x="1" y="1" width="6" height="6" fill="#1e3a66"/><rect x="13" y="1" width="6" height="6" fill="#1e3a66"/><rect x="7" y="7" width="6" height="6" fill="#1e3a66"/><rect x="1" y="13" width="6" height="6" fill="#1e3a66"/></g><rect x="15" y="15" width="9.5" height="9.5" rx="1.5" fill="#5d9e5d" stroke="#3f7a3f" stroke-width="0.8"/><path d="M19.75,17v5.5M17,19.75h5.5" stroke="#fff" stroke-width="2"/></g><g transform="translate(7,204)"><path d="M1.5,23 Q3,12 10,6 Q17,1 24,1 Q22,7 18,12 Q12,19 5,18 Q3,20 2.5,23Z" fill="#6a93c8" stroke="#2f4a78" stroke-width="0.9"/><path d="M3,22 Q10,12 22,3" stroke="#2f4a78" stroke-width="0.7" fill="none"/><rect x="15" y="15" width="9.5" height="9.5" rx="1.5" fill="#5d9e5d" stroke="#3f7a3f" stroke-width="0.8"/><path d="M19.75,17v5.5M17,19.75h5.5" stroke="#fff" stroke-width="2"/></g><g transform="translate(7,238)"><path d="M2,4.5 Q1.8,1.2 6,1.2 H14 Q18.5,1.2 18.5,5.5 V10.5 L20,11.5 H17.2 Q15.5,12.5 14,12 V17 Q13.5,19 12,18.6 Q10.5,18.2 10.5,16.5 V12.5 Q8,14.2 5.5,13.2 Q2.3,12 2,8 Z" fill="#5f8fcc" stroke="#1e3a6a" stroke-width="1.1"/><path d="M6.5,2.2 Q4.5,8 7.5,12.5 M10.5,3 Q9.5,8 13,11" fill="none" stroke="#1e3a6a" stroke-width="0.9"/><rect x="16.3" y="16" width="8.8" height="8.8" rx="1.5" fill="#5d9e5d" stroke="#3f7a3f" stroke-width="0.8"/><path d="M20.700000000000003,18v4.800000000000001M18.3,20.4h4.800000000000001" stroke="#fff" stroke-width="2"/></g><g transform="translate(7,272)"><ellipse cx="12.7" cy="11.5" rx="11.5" ry="11" fill="#a8c4e8" stroke="#4a6a98" stroke-width="0.9"/><path d="M4,7 h5 v3 h-4z M11,5 h7 v4 h-4 v4 h-3z M6,13 h3 v6 h-2z M15,13 h4 v3 h-4z M8,3.5 h4 v1.5 h-4z" fill="#2a4a7a"/><path d="M2,11.5h21.5" stroke="#c8d8ee" stroke-width="0.6"/><rect x="15.5" y="15.5" width="9.5" height="9.5" rx="1.5" fill="#5d9e5d" stroke="#3f7a3f" stroke-width="0.8"/><path d="M20.25,17.5v5.5M17.5,20.25h5.5" stroke="#fff" stroke-width="2"/></g><g transform="translate(7,306)"><ellipse cx="12.7" cy="11.5" rx="11.5" ry="10.5" fill="#2e5a90" stroke="#1e3a60"/><path d="M1.5,8h22M1.5,15h22" stroke="#a8c8ee" stroke-width="2"/><ellipse cx="12.7" cy="11.5" rx="4.5" ry="10.5" fill="none" stroke="#a8c8ee" stroke-width="1.6"/><rect x="9" y="9.5" width="7.5" height="4" fill="#7aa0d0"/><rect x="15.5" y="15.5" width="9.5" height="9.5" rx="1.5" fill="#5d9e5d" stroke="#3f7a3f" stroke-width="0.8"/><path d="M20.25,17.5v5.5M17.5,20.25h5.5" stroke="#fff" stroke-width="2"/></g><g transform="translate(7,340)"><ellipse cx="12.7" cy="11.5" rx="11.5" ry="11" fill="#e8eef6" stroke="#3a5a8a"/><path d="M1.5,8h22M1.5,15h22M12.7,0.5v22" stroke="#9ab0d0" stroke-width="0.8"/><ellipse cx="12.7" cy="11.5" rx="5" ry="11" fill="none" stroke="#9ab0d0" stroke-width="0.8"/><path d="M5,6 L11,18 L16,6 L20,6" fill="none" stroke="#2a3a50" stroke-width="1.2"/><g fill="#fff" stroke="#2a3a50"><circle cx="5" cy="6" r="1.6"/><circle cx="11" cy="18" r="1.6"/><circle cx="16" cy="6" r="1.6"/><circle cx="20" cy="6" r="1.6"/></g><rect x="15.5" y="15.5" width="9.5" height="9.5" rx="1.5" fill="#5d9e5d" stroke="#3f7a3f" stroke-width="0.8"/><path d="M20.25,17.5v5.5M17.5,20.25h5.5" stroke="#fff" stroke-width="2"/></g><g transform="translate(7,375)"><path d="M7,1.5 Q14,0.5 14,7 Q13.5,14 4,20 Q10,12.5 8.5,10.5 Q2,10.5 2.5,6 Q3,1.8 7,1.5Z" fill="#2f5a90"/><rect x="15" y="13" width="9.5" height="9.5" rx="1.5" fill="#5d9e5d" stroke="#3f7a3f" stroke-width="0.8"/><path d="M19.75,15v5.5M17,17.75h5.5" stroke="#fff" stroke-width="2"/></g><g transform="translate(7,409)"><rect x="1.5" y="1.5" width="19" height="19" rx="2" fill="#a8c4e6" stroke="#5a7aa8"/><path d="M3,3 L9,17 L15,5 L20,3" fill="none" stroke="#2a3a50" stroke-width="1.2"/><g fill="#fff" stroke="#2a3a50"><circle cx="3.5" cy="3.5" r="1.6"/><circle cx="9" cy="17" r="1.6"/><circle cx="15" cy="5" r="1.6"/><circle cx="19.5" cy="3.5" r="1.6"/></g><rect x="15" y="15" width="9.5" height="9.5" rx="1.5" fill="#5d9e5d" stroke="#3f7a3f" stroke-width="0.8"/><path d="M19.75,17v5.5M17,19.75h5.5" stroke="#fff" stroke-width="2"/></g><g transform="translate(7,442)"><path d="M3,3.5 L8.5,18 L14,3.5 L20,3.5" fill="none" stroke="#3c4a5a" stroke-width="1.3"/><g fill="#fff" stroke="#3c4a5a" stroke-width="1.1"><circle cx="3" cy="3.5" r="2"/><circle cx="8.5" cy="18" r="2"/><circle cx="14" cy="3.5" r="2"/><circle cx="20" cy="3.5" r="2"/></g><rect x="14" y="15" width="9.5" height="9.5" rx="1.2" fill="#e8c84a"/><circle cx="18.75" cy="19.75" r="2" fill="none" stroke="#fff" stroke-width="1.1"/><path d="M18.75,16.5v2M18.75,23.0v-2M15.5,19.75h2M22.0,19.75h-2M16.5,17.5l1.4,1.4M21.0,22.0l-1.4,-1.4M21.0,17.5l-1.4,1.4M16.5,22.0l1.4,-1.4" stroke="#fff" stroke-width="1"/></g><g transform="translate(7,489)"><path d="M2,2 L10,20" stroke="#4a7ab8" stroke-width="1.1"/><circle cx="2" cy="2" r="1.2" fill="#4a7ab8"/><circle cx="10" cy="20" r="1.2" fill="#4a7ab8"/><path d="M10,6 Q16,1 21,5 Q23,11 17,16 L12,22" fill="none" stroke="#d03030" stroke-width="1.2"/><g fill="#fff" stroke="#d03030" stroke-width="0.8"><circle cx="10" cy="6" r="1.3"/><circle cx="21" cy="5" r="1.3"/><circle cx="17" cy="16" r="1.3"/><circle cx="12" cy="22" r="1.3"/></g><path d="M14,12 Q17,9 19,10" stroke="#7aa0d0" stroke-width="0.8" fill="none"/><circle cx="17" cy="22" r="1" fill="#4a7ab8"/><circle cx="20" cy="19" r="1" fill="#4a7ab8"/></g></svg>
<div style="position:absolute;left:352px;top:121px;width:2px;height:566px;background:#cbc7cb"></div>
<div style="position:absolute;left:354px;top:121px;width:897px;height:566px;background:#ffffff"></div>
<div style="position:absolute;left:353px;top:121px;width:898px;height:1px;background:#bbb8bb"></div>
<div style="position:absolute;left:1250px;top:121px;width:1px;height:566px;background:#dedade"></div>
<svg style="position:absolute;left:55px;top:127px" width="105" height="5"><defs><pattern id="dh55_127" width="6" height="5" patternUnits="userSpaceOnUse"><rect x="0" y="0" width="1.3" height="1.3" fill="#b9b5b9"/><rect x="3" y="3" width="1.3" height="1.3" fill="#b9b5b9"/></pattern></defs><rect width="105" height="5" fill="url(#dh55_127)"/></svg>
<div style="position:absolute;left:165.5px;top:124.95px;font-family:'Liberation Sans',sans-serif;font-size:10px;line-height:11.50px;white-space:nowrap;color:#000;">Каталог</div>
<svg style="position:absolute;left:206px;top:127px" width="106" height="5"><defs><pattern id="dh206_127" width="6" height="5" patternUnits="userSpaceOnUse"><rect x="0" y="0" width="1.3" height="1.3" fill="#b9b5b9"/><rect x="3" y="3" width="1.3" height="1.3" fill="#b9b5b9"/></pattern></defs><rect width="106" height="5" fill="url(#dh206_127)"/></svg>
<svg style="position:absolute;left:316px;top:123px" width="30" height="14"><rect x="0.5" y="0.5" width="13" height="12.5" rx="2" fill="#f3f0f3" stroke="#8e8a8e"/><rect x="15.5" y="0.5" width="13" height="12.5" rx="2" fill="#f3f0f3" stroke="#8e8a8e"/><path d="M5.5,3.5 h5 v4 h-2 M3.5,5.5 h5 v4.5 h-5z M5.5,3.5 v2" fill="none" stroke="#000" stroke-width="1.3"/><path d="M18.8,3.3 L25.2,9.7 M25.2,3.3 L18.8,9.7" stroke="#000" stroke-width="1.5"/></svg>
<svg style="position:absolute;left:0;top:0" width="354" height="520"><g transform="translate(60,148)"><rect x="1.5" y="1.5" width="11.5" height="11.5" fill="#ececec" stroke="#7a7a7a"/><rect x="9.5" y="10" width="5.5" height="5.5" rx="1" fill="#8ccc8c" stroke="#4a8a4a" stroke-width="0.8"/></g><g transform="translate(87,148)"><path d="M1.5,8 A6.2,6.2 0 0,1 12.5,4.5 L14.5,2.5 V8.5 H8.5 L10.5,6.5 A3.5,3.5 0 0,0 4.5,8Z" fill="#4a86cc" stroke="#356aa8" stroke-width="0.5"/><path d="M14.5,9 A6.2,6.2 0 0,1 3.5,12.5 L1.5,14.5 V8.5 H7.5 L5.5,10.5 A3.5,3.5 0 0,0 11.5,9Z" fill="#4a86cc" stroke="#356aa8" stroke-width="0.5"/></g><g transform="translate(114,148)"><path d="M1,2 H15 V4 L10,9 V15.5 L7,13.5 V9 L1,4Z" fill="#6a94c8" stroke="#4a6a98" stroke-width="0.7"/><rect x="1" y="1.5" width="14" height="2.3" rx="1" fill="#e8dc7a" stroke="#b8a84a" stroke-width="0.5"/></g><g transform="translate(141,147)"><path d="M2,2.5h5M2.5,2.5V14M2.5,8.5h3M2.5,13.5h3" stroke="#a0a0a0" stroke-width="0.9"/><rect x="5" y="7" width="3" height="3" fill="#f0b030"/><rect x="5" y="12" width="3" height="3" fill="#f0b030"/><path d="M11,1 L15.5,6 H13 V15 H9 V6 H6.5Z" fill="#5a86c4" stroke="#2a4a7a" stroke-width="0.7"/></g><g transform="translate(168,148)"><circle cx="8" cy="8" r="7" fill="#5b8bc9" stroke="#3f6aa4" stroke-width="0.6"/><text x="5.8" y="12.5" font-family="Liberation Serif" font-style="italic" font-weight="bold" font-size="11" fill="#fff">i</text></g><g transform="translate(60,490)"><path d="M9.5,8 L15.5,1.5" stroke="#d8b830" stroke-width="2.2"/><path d="M1,10 L6,4 L12,8.5 L7,14Z" fill="#e87a5a"/><path d="M3,7 L6,4 L9,6.5 L5.5,9.5Z" fill="#f0d040"/><path d="M1,10 L3.5,7.5 L7,10.5 L4.5,13Z" fill="#d84a5a"/><path d="M6,11 L9,8 L12,8.5 L7,14Z" fill="#f0a040"/></g><g transform="translate(87,488)"><path d="M1.5,12.5 V15.5 H5 M3.5,10 V13.5 H7" fill="none" stroke="#8a8a8a"/><rect x="5.5" y="4" width="8" height="10" fill="#f4f4f4" stroke="#7a7a7a"/><path d="M7.5,4 V1.5 H11.5 V4 M9.5,6 V11" fill="none" stroke="#7a7a7a"/><rect x="10.5" y="11" width="5" height="5" rx="1" fill="#8ccc8c" stroke="#4a8a4a" stroke-width="0.8"/></g><g transform="translate(113,491)"><path d="M1,6.5 Q8.5,-1 16,6.5 Q8.5,13 1,6.5Z" fill="#dde4ee" stroke="#8a96a8" stroke-width="0.8"/><circle cx="8.5" cy="6" r="3.3" fill="#5a7ac0"/><circle cx="8.5" cy="6" r="1.3" fill="#1a2a4a"/><path d="M13.5,12.5 h5.5 l-2.75,3z" fill="#000"/></g><g transform="translate(141,488)"><path d="M1,2 H15 V4 L10,9 V15.5 L7,13.5 V9 L1,4Z" fill="#6a94c8" stroke="#4a6a98" stroke-width="0.7"/><rect x="1" y="1.5" width="14" height="2.3" rx="1" fill="#e8dc7a" stroke="#b8a84a" stroke-width="0.5"/></g><g transform="translate(169,489)"><text x="0" y="11.5" font-family="Liberation Serif" font-size="14" fill="#9a9a9a">ε</text><rect x="9.5" y="9" width="6" height="7" fill="#d8d8d8"/><path d="M11.5,10.5v4M13.5,10.5v4" stroke="#f4f4f4" stroke-width="0.8"/></g><g transform="translate(207,489)"><path d="M2,2.5h5M2.5,2.5V14M2.5,8.5h3M2.5,13.5h3" stroke="#a0a0a0" stroke-width="0.9"/><rect x="5" y="7" width="3" height="3" fill="#f0b030"/><rect x="5" y="12" width="3" height="3" fill="#f0b030"/><path d="M11,15.5 L15.5,10.5 H13 V1.5 H9 V10.5 H6.5Z" fill="#5a86c4" stroke="#2a4a7a" stroke-width="0.7"/></g><g transform="translate(234,489)"><path d="M2,2.5h5M2.5,2.5V14M2.5,8.5h3M2.5,13.5h3" stroke="#a0a0a0" stroke-width="0.9"/><rect x="5" y="7" width="3" height="3" fill="#f0b030"/><rect x="5" y="12" width="3" height="3" fill="#f0b030"/><path d="M11,1 L15.5,6 H13 V15 H9 V6 H6.5Z" fill="#5a86c4" stroke="#2a4a7a" stroke-width="0.7"/></g><g transform="translate(261,489)"><rect x="1.5" y="1.5" width="11.5" height="11.5" fill="#ececec" stroke="#7a7a7a"/><rect x="8.5" y="10" width="6.5" height="5" rx="1" fill="#e04a5a"/><path d="M9.8,12.5h4" stroke="#fff" stroke-width="1.3"/></g></svg>
<div style="position:absolute;left:52px;top:172px;width:294px;height:284px;background:#fff;border:1px solid #a9a5a9;border-radius:2px;box-sizing:border-box"></div>
<svg style="position:absolute;left:53px;top:173px" width="275" height="282"><g stroke="#8c888c" stroke-width="1" stroke-dasharray="1,2" fill="none"><path d="M10.5,5 V282"/><path d="M14,10.5 H24"/><path d="M10.5,26.5 H24"/><path d="M14,42.5 H24"/><path d="M14,58.5 H24"/><path d="M14,74.5 H24"/><path d="M14,90.5 H24"/><path d="M10.5,106.5 H24"/><path d="M10.5,122.5 H24"/><path d="M10.5,138.5 H24"/><path d="M10.5,154.5 H24"/><path d="M10.5,170.5 H24"/><path d="M10.5,186.5 H24"/><path d="M10.5,202.5 H24"/><path d="M10.5,218.5 H24"/><path d="M10.5,234.5 H24"/><path d="M10.5,250.5 H24"/><path d="M10.5,266.5 H24"/><path d="M10.5,282.5 H24"/></g><rect x="6.5" y="5.5" width="8" height="8" fill="#fff" stroke="#8c888c"/><path d="M8.5,10.5 h4 M10.5,8.5 v4" stroke="#333" stroke-width="1"/><rect x="6.5" y="37.5" width="8" height="8" fill="#fff" stroke="#8c888c"/><path d="M8.5,42.5 h4 M10.5,40.5 v4" stroke="#333" stroke-width="1"/><rect x="6.5" y="53.5" width="8" height="8" fill="#fff" stroke="#8c888c"/><path d="M8.5,58.5 h4 M10.5,56.5 v4" stroke="#333" stroke-width="1"/><rect x="6.5" y="69.5" width="8" height="8" fill="#fff" stroke="#8c888c"/><path d="M8.5,74.5 h4 M10.5,72.5 v4" stroke="#333" stroke-width="1"/><rect x="6.5" y="85.5" width="8" height="8" fill="#fff" stroke="#8c888c"/><path d="M8.5,90.5 h4 M10.5,88.5 v4" stroke="#333" stroke-width="1"/></svg>
<svg style="position:absolute;left:0;top:173px" width="120" height="282"><defs><linearGradient id="fg" x1="0" x2="1"><stop offset="0" stop-color="#f2dc88"/><stop offset="0.5" stop-color="#e8cc60"/><stop offset="1" stop-color="#d4b24a"/></linearGradient></defs><g transform="translate(76,2)"><path d="M2,1.5 H8 L9,3 H12.5 V15.5 H2Z" fill="url(#fg)" stroke="#c9a840" stroke-width="0.7"/><path d="M8,3 Q11,3 11.5,6 V15.5" fill="none" stroke="#c0a040" stroke-width="0.7"/></g><g transform="translate(76,18)"><path d="M8.5,1 L10.6,6 L16,6.3 L11.8,9.7 L13.3,15 L8.5,12 L3.7,15 L5.2,9.7 L1,6.3 L6.4,6Z" fill="#f0f0f0" stroke="#b8b8c0" stroke-width="0.9"/></g><g transform="translate(76,34)"><path d="M2,1.5 H8 L9,3 H12.5 V15.5 H2Z" fill="url(#fg)" stroke="#c9a840" stroke-width="0.7"/><path d="M8,3 Q11,3 11.5,6 V15.5" fill="none" stroke="#c0a040" stroke-width="0.7"/></g><g transform="translate(76,50)"><path d="M2,1.5 H8 L9,3 H12.5 V15.5 H2Z" fill="url(#fg)" stroke="#c9a840" stroke-width="0.7"/><path d="M8,3 Q11,3 11.5,6 V15.5" fill="none" stroke="#c0a040" stroke-width="0.7"/></g><g transform="translate(76,66)"><path d="M2,1.5 H8 L9,3 H12.5 V15.5 H2Z" fill="url(#fg)" stroke="#c9a840" stroke-width="0.7"/><path d="M8,3 Q11,3 11.5,6 V15.5" fill="none" stroke="#c0a040" stroke-width="0.7"/></g><g transform="translate(76,82)"><path d="M2,1.5 H8 L9,3 H12.5 V15.5 H2Z" fill="url(#fg)" stroke="#c9a840" stroke-width="0.7"/><path d="M8,3 Q11,3 11.5,6 V15.5" fill="none" stroke="#c0a040" stroke-width="0.7"/></g><g transform="translate(76,98)"><rect x="1" y="0.5" width="16" height="15.5" rx="2.5" fill="#6a9ad4"/><text x="2" y="11" font-family="Liberation Sans" font-size="7.2" fill="#fff">DB2</text></g><g transform="translate(76,114)"><path d="M1.5,1.5 Q12,2 16.5,9 Q10,10.5 1,15.5 Q5,8 1.5,1.5Z" fill="#5a8ac8" stroke="#2a4a7a" stroke-width="0.7"/><path d="M5,3 Q7,9 4,14 M9,4.5 Q10,9 8,12.5 M12.5,6 Q13,8.5 12,10.5" stroke="#2a4a7a" stroke-width="0.6" fill="none"/></g><g transform="translate(76,130)"><rect x="1.5" y="3" width="15" height="10.5" rx="4.5" fill="#6a9ad4" stroke="#2a4a7a" stroke-width="1"/></g><g transform="translate(76,146)"><path d="M2,4 Q1.8,1 5.5,1 H12.5 Q16,1 16,4.5 V9 L17,10 H15 Q13.8,10.8 12.5,10.5 V14.5 Q12,16 10.8,15.7 Q9.6,15.4 9.6,14 V10.8 Q7.5,12 5.2,11.2 Q2.2,10.2 2,7 Z" fill="#5f8fcc" stroke="#1e3a6a" stroke-width="0.9"/><path d="M5.8,1.8 Q4.2,6.5 6.8,10.5 M9.5,2.5 Q8.8,6.5 11.8,9.5" fill="none" stroke="#1e3a6a" stroke-width="0.7"/></g><g transform="translate(76,162)"><path d="M1.5,16 Q3,8 9,4 Q13,1.5 16.5,1 Q15,6 12,9 Q8,12.5 4,12.5 Q2.5,14 1.5,16Z" fill="#6a93c8" stroke="#2f4a78" stroke-width="0.7"/></g><g transform="translate(76,178)"><circle cx="8.8" cy="8" r="7.5" fill="#dde8f4" stroke="#4a6a98" stroke-width="0.9"/><path d="M1.8,5.5h14M1.8,10.5h14M8.8,0.5v15" stroke="#7a9ac8" stroke-width="0.6"/><ellipse cx="8.8" cy="8" rx="3.5" ry="7.5" fill="none" stroke="#7a9ac8" stroke-width="0.6"/><path d="M2,9 Q4,8 6,10 Q8,12 7,15.5 Q3,14 2,9Z" fill="#2a7a4a"/><path d="M5,4 L8,10 L11,4 L14,4" fill="none" stroke="#333" stroke-width="0.8"/></g><g transform="translate(76,194)"><circle cx="8.8" cy="8" r="7.5" fill="#8ab0de" stroke="#3a5a8a" stroke-width="0.9"/><path d="M1.8,5.5h14M1.8,10.5h14M8.8,0.5v15" stroke="#c0d4ee" stroke-width="0.6"/><ellipse cx="8.8" cy="8" rx="3.5" ry="7.5" fill="none" stroke="#c0d4ee" stroke-width="0.6"/><path d="M2,9 Q4,8 6,10 Q8,12 7,15.5 Q3,14 2,9Z" fill="#2a7a4a"/><path d="M4,4h3v2h-3z M10,3h3v3h-2z" fill="#2a4a7a"/></g><g transform="translate(76,210)"><circle cx="8.8" cy="8" r="7.5" fill="#eef2f8" stroke="#7a9ac8" stroke-width="0.9"/><path d="M1.8,5.5h14M1.8,10.5h14M8.8,0.5v15" stroke="#9ab4d8" stroke-width="0.6"/><ellipse cx="8.8" cy="8" rx="3.5" ry="7.5" fill="none" stroke="#9ab4d8" stroke-width="0.6"/></g><g transform="translate(76,226)"><circle cx="8.8" cy="8" r="7.5" fill="#9ab8e0" stroke="#3a5a8a" stroke-width="0.9"/><path d="M1.8,5.5h14M1.8,10.5h14M8.8,0.5v15" stroke="#c8d8ee" stroke-width="0.6"/><ellipse cx="8.8" cy="8" rx="3.5" ry="7.5" fill="none" stroke="#c8d8ee" stroke-width="0.6"/><path d="M4,4 h3 v3 h-2z M10,3 h4 v3 h-2 v2 h-2z M5,9 h2 v4 h-1z M11,10 h3 v2 h-2z" fill="#2a4a7a"/></g><g transform="translate(76,242)"><circle cx="8.8" cy="8" r="7.5" fill="#2e5a90" stroke="#1e3a60" stroke-width="0.9"/><path d="M1.8,5.5h14M1.8,10.5h14M8.8,0.5v15" stroke="#9cc0ea" stroke-width="0.6"/><ellipse cx="8.8" cy="8" rx="3.5" ry="7.5" fill="none" stroke="#9cc0ea" stroke-width="0.6"/></g><g transform="translate(76,258)"><circle cx="8.8" cy="8" r="7.5" fill="#eef2f8" stroke="#4a6a98" stroke-width="0.9"/><path d="M1.8,5.5h14M1.8,10.5h14M8.8,0.5v15" stroke="#9ab4d8" stroke-width="0.6"/><ellipse cx="8.8" cy="8" rx="3.5" ry="7.5" fill="none" stroke="#9ab4d8" stroke-width="0.6"/><path d="M4,4 L8.5,13 L12.5,4 L15,4" fill="none" stroke="#333" stroke-width="0.9"/></g><g transform="translate(76,274)"><circle cx="8.8" cy="8" r="7.5" fill="#6a9ad0" stroke="#2a4a7a" stroke-width="0.9"/><path d="M1.8,5.5h14M1.8,10.5h14M8.8,0.5v15" stroke="#c0d4ee" stroke-width="0.6"/><ellipse cx="8.8" cy="8" rx="3.5" ry="7.5" fill="none" stroke="#c0d4ee" stroke-width="0.6"/></g></svg>
<div style="position:absolute;left:98.8px;top:177.04px;font-family:'Liberation Sans',sans-serif;font-size:11px;line-height:12.65px;white-space:nowrap;color:#000;">Домашний каталог</div>
<div style="position:absolute;left:98.8px;top:193.04px;font-family:'Liberation Sans',sans-serif;font-size:11px;line-height:12.65px;white-space:nowrap;color:#000;">Избранное</div>
<div style="position:absolute;left:98.8px;top:209.04px;font-family:'Liberation Sans',sans-serif;font-size:11px;line-height:12.65px;white-space:nowrap;color:#000;">C:/</div>
<div style="position:absolute;left:98.8px;top:225.04px;font-family:'Liberation Sans',sans-serif;font-size:11px;line-height:12.65px;white-space:nowrap;color:#000;">D:/</div>
<div style="position:absolute;left:98.8px;top:241.04px;font-family:'Liberation Sans',sans-serif;font-size:11px;line-height:12.65px;white-space:nowrap;color:#000;">E:/</div>
<div style="position:absolute;left:98.8px;top:257.05px;font-family:'Liberation Sans',sans-serif;font-size:11px;line-height:12.65px;white-space:nowrap;color:#000;">F:/</div>
<div style="position:absolute;left:98.8px;top:273.05px;font-family:'Liberation Sans',sans-serif;font-size:11px;line-height:12.65px;white-space:nowrap;color:#000;">DB2</div>
<div style="position:absolute;left:98.8px;top:289.05px;font-family:'Liberation Sans',sans-serif;font-size:11px;line-height:12.65px;white-space:nowrap;color:#000;">MSSQL</div>
<div style="position:absolute;left:98.8px;top:305.05px;font-family:'Liberation Sans',sans-serif;font-size:11px;line-height:12.65px;white-space:nowrap;color:#000;">Oracle</div>
<div style="position:absolute;left:98.8px;top:321.05px;font-family:'Liberation Sans',sans-serif;font-size:11px;line-height:12.65px;white-space:nowrap;color:#000;">PostGIS</div>
<div style="position:absolute;left:98.8px;top:337.05px;font-family:'Liberation Sans',sans-serif;font-size:11px;line-height:12.65px;white-space:nowrap;color:#000;">SpatiaLite</div>
<div style="position:absolute;left:98.8px;top:353.05px;font-family:'Liberation Sans',sans-serif;font-size:11px;line-height:12.65px;white-space:nowrap;color:#000;">ArcGisFeatureServer</div>
<div style="position:absolute;left:98.8px;top:369.05px;font-family:'Liberation Sans',sans-serif;font-size:11px;line-height:12.65px;white-space:nowrap;color:#000;">ArcGisMapServer</div>
<div style="position:absolute;left:98.8px;top:385.05px;font-family:'Liberation Sans',sans-serif;font-size:11px;line-height:12.65px;white-space:nowrap;color:#000;">OWS</div>
<div style="position:absolute;left:98.8px;top:401.05px;font-family:'Liberation Sans',sans-serif;font-size:11px;line-height:12.65px;white-space:nowrap;color:#000;">Tile Server (XYZ)</div>
<div style="position:absolute;left:98.8px;top:417.05px;font-family:'Liberation Sans',sans-serif;font-size:11px;line-height:12.65px;white-space:nowrap;color:#000;">WCS</div>
<div style="position:absolute;left:98.8px;top:433.05px;font-family:'Liberation Sans',sans-serif;font-size:11px;line-height:12.65px;white-space:nowrap;color:#000;">WFS</div>
<div style="position:absolute;left:98.8px;top:449.05px;font-family:'Liberation Sans',sans-serif;font-size:11px;line-height:12.65px;white-space:nowrap;color:#000;">WMS</div>
<div style="position:absolute;left:53px;top:455px;width:275px;height:1px;background:#a9a5a9"></div>
<div style="position:absolute;left:52px;top:456px;width:300px;height:12px;background:#f6f1f5"></div>
<svg style="position:absolute;left:327px;top:173px" width="18" height="283"><rect x="0" y="0" width="18" height="283" fill="#f4f1f4"/><rect x="1.5" y="1.5" width="15" height="15.5" rx="2.5" fill="#f0eef0" stroke="#8f8b8f"/><path d="M5,12 h8 l-4,-4.5z" fill="#000"/><rect x="1.5" y="17" width="15" height="218" fill="#f6f4f7" stroke="#8f8b8f"/><g fill="#9c989c"><rect x="5" y="118" width="1.3" height="1.3"/><rect x="9" y="118" width="1.3" height="1.3"/><rect x="13" y="118" width="1.3" height="1.3"/><rect x="5" y="122" width="1.3" height="1.3"/><rect x="9" y="122" width="1.3" height="1.3"/><rect x="13" y="122" width="1.3" height="1.3"/><rect x="5" y="126" width="1.3" height="1.3"/><rect x="9" y="126" width="1.3" height="1.3"/><rect x="13" y="126" width="1.3" height="1.3"/><rect x="5" y="130" width="1.3" height="1.3"/><rect x="9" y="130" width="1.3" height="1.3"/><rect x="13" y="130" width="1.3" height="1.3"/><rect x="5" y="134" width="1.3" height="1.3"/><rect x="9" y="134" width="1.3" height="1.3"/><rect x="13" y="134" width="1.3" height="1.3"/></g><rect x="1.5" y="249.5" width="15" height="15" rx="2.5" fill="#f0eef0" stroke="#8f8b8f"/><path d="M5,261 h8 l-4,-4.5z" fill="#000"/><rect x="1.5" y="264.5" width="15" height="16" rx="2.5" fill="#f0eef0" stroke="#8f8b8f"/><path d="M5,269.5 h8 l-4,4.5z" fill="#000"/></svg>
<svg style="position:absolute;left:347px;top:309px" width="5" height="191"><defs><pattern id="dv347_309" width="5" height="6" patternUnits="userSpaceOnUse"><rect x="0" y="0" width="1.3" height="1.3" fill="#b9b5b9"/><rect x="3" y="3" width="1.3" height="1.3" fill="#b9b5b9"/></pattern></defs><rect width="5" height="191" fill="url(#dv347_309)"/></svg>
<svg style="position:absolute;left:148px;top:457px" width="95" height="5"><defs><pattern id="dh148_457" width="6" height="5" patternUnits="userSpaceOnUse"><rect x="0" y="0" width="1.3" height="1.3" fill="#b9b5b9"/><rect x="3" y="3" width="1.3" height="1.3" fill="#b9b5b9"/></pattern></defs><rect width="95" height="5" fill="url(#dh148_457)"/></svg>
<svg style="position:absolute;left:55px;top:468px" width="95" height="5"><defs><pattern id="dh55_468" width="6" height="5" patternUnits="userSpaceOnUse"><rect x="0" y="0" width="1.3" height="1.3" fill="#b9b5b9"/><rect x="3" y="3" width="1.3" height="1.3" fill="#b9b5b9"/></pattern></defs><rect width="95" height="5" fill="url(#dh55_468)"/></svg>
<div style="position:absolute;left:154.5px;top:466.86px;font-family:'Liberation Sans',sans-serif;font-size:9px;line-height:10.35px;white-space:nowrap;color:#000;">Панель слоёв</div>
<svg style="position:absolute;left:206px;top:468px" width="106" height="5"><defs><pattern id="dh206_468" width="6" height="5" patternUnits="userSpaceOnUse"><rect x="0" y="0" width="1.3" height="1.3" fill="#b9b5b9"/><rect x="3" y="3" width="1.3" height="1.3" fill="#b9b5b9"/></pattern></defs><rect width="106" height="5" fill="url(#dh206_468)"/></svg>
<svg style="position:absolute;left:316px;top:464px" width="30" height="14"><rect x="0.5" y="0.5" width="13" height="12.5" rx="2" fill="#f3f0f3" stroke="#8e8a8e"/><rect x="15.5" y="0.5" width="13" height="12.5" rx="2" fill="#f3f0f3" stroke="#8e8a8e"/><path d="M5.5,3.5 h5 v4 h-2 M3.5,5.5 h5 v4.5 h-5z M5.5,3.5 v2" fill="none" stroke="#000" stroke-width="1.3"/><path d="M18.8,3.3 L25.2,9.7 M25.2,3.3 L18.8,9.7" stroke="#000" stroke-width="1.5"/></svg>
<svg style="position:absolute;left:190px;top:494.3px" width="9" height="5"><path d="M0,0 H9 L4.5,5Z" fill="#8a868a"/></svg>
<div style="position:absolute;left:52px;top:513px;width:293px;height:180px;background:#fff;border:2px solid #4f8fda;border-top-width:1.5px;border-radius:2px;box-sizing:border-box"></div>
<svg style="position:absolute;left:54px;top:515px" width="290" height="60"><g stroke="#8c888c" stroke-dasharray="1,2" fill="none"><path d="M10.5,0 V41.5 H22 M10.5,25.5 H22 M10.5,9.5 H22"/></g><rect x="62" y="0.5" width="227" height="15" fill="none" stroke="#000" stroke-dasharray="1,1"/></svg>
<svg style="position:absolute;left:77px;top:517px" width="13" height="13"><rect x="0.5" y="0.5" width="12" height="12" fill="#fff" stroke="#9a969a"/><path d="M3.5,3.5 L9.5,9.5 M9.5,3.5 L3.5,9.5" stroke="#000" stroke-width="2.4"/></svg>
<div style="position:absolute;left:96px;top:515px;width:16px;height:16px;background:#5570a8;border:1px solid #3b3b55;box-sizing:border-box"></div>
<div style="position:absolute;left:118px;top:518.04px;font-family:'Liberation Sans',sans-serif;font-size:11px;line-height:12.65px;white-space:nowrap;color:#000;font-weight:bold;text-decoration:underline;">TEST</div>
<svg style="position:absolute;left:77px;top:533px" width="13" height="13"><rect x="0.5" y="0.5" width="12" height="12" fill="#fff" stroke="#9a969a"/><path d="M3.5,3.5 L9.5,9.5 M9.5,3.5 L3.5,9.5" stroke="#000" stroke-width="2.4"/></svg>
<div style="position:absolute;left:96px;top:539px;width:16px;height:1px;background:#d8d2a8"></div>
<div style="position:absolute;left:118px;top:534.04px;font-family:'Liberation Sans',sans-serif;font-size:11px;line-height:12.65px;white-space:nowrap;color:#000;font-weight:bold;">Grid</div>
<svg style="position:absolute;left:77px;top:549px" width="13" height="13"><rect x="0.5" y="0.5" width="12" height="12" fill="#fff" stroke="#9a969a"/><path d="M3.5,3.5 L9.5,9.5 M9.5,3.5 L3.5,9.5" stroke="#000" stroke-width="2.4"/></svg>
<div style="position:absolute;left:96px;top:547px;width:16px;height:16px;background:#5c4785;border:1px solid #3b3b55;box-sizing:border-box"></div>
<div style="position:absolute;left:118px;top:550.04px;font-family:'Liberation Sans',sans-serif;font-size:11px;line-height:12.65px;white-space:nowrap;color:#000;font-weight:bold;">Frame</div>
<svg style="position:absolute;left:0;top:0" width="1251" height="687" viewBox="0 0 1251 687">
<defs><clipPath id="fc"><rect x="505" y="215" width="447" height="273"/></clipPath>
<pattern id="gp" width="3.2" height="3.2" patternUnits="userSpaceOnUse" patternTransform="rotate(40)"><rect width="3.2" height="3.2" fill="#0f1628"/><rect x="1" y="1" width="1.6" height="1.6" fill="#7890b8"/></pattern></defs>
<rect x="505.5" y="215.5" width="447" height="272" fill="#654c88" stroke="#2a2238" stroke-width="1"/>
<g clip-path="url(#fc)" fill="none" stroke="#e8e0b6" stroke-width="0.95">
<circle cx="756.5" cy="171.0" r="60"/>
<circle cx="756.5" cy="171.0" r="88"/>
<circle cx="756.5" cy="171.0" r="144"/>
<circle cx="756.5" cy="171.0" r="202"/>
<circle cx="756.5" cy="171.0" r="260"/>
<circle cx="756.5" cy="171.0" r="317.5"/>
<circle cx="756.5" cy="171.0" r="374"/>
<line x1="697.2" y1="180.2" x2="64.7" y2="278.1"/>
<line x1="699.1" y1="188.5" x2="86.8" y2="374.7"/>
<line x1="702.1" y1="196.4" x2="122.3" y2="467.3"/>
<line x1="706.3" y1="203.8" x2="170.5" y2="553.9"/>
<line x1="711.4" y1="210.6" x2="230.5" y2="632.8"/>
<line x1="717.5" y1="216.6" x2="301.0" y2="702.5"/>
<line x1="724.3" y1="221.6" x2="380.6" y2="761.5"/>
<line x1="731.8" y1="225.7" x2="467.8" y2="808.7"/>
<line x1="739.7" y1="228.6" x2="560.7" y2="843.1"/>
<line x1="748.0" y1="230.4" x2="657.6" y2="864.0"/>
<line x1="756.5" y1="231.0" x2="756.5" y2="871.0"/>
<line x1="765.0" y1="230.4" x2="855.4" y2="864.0"/>
<line x1="773.3" y1="228.6" x2="952.3" y2="843.1"/>
<line x1="781.2" y1="225.7" x2="1045.2" y2="808.7"/>
<line x1="788.7" y1="221.6" x2="1132.4" y2="761.5"/>
<line x1="795.5" y1="216.6" x2="1212.0" y2="702.5"/>
<line x1="801.6" y1="210.6" x2="1282.5" y2="632.8"/>
<line x1="806.7" y1="203.8" x2="1342.5" y2="553.9"/>
<line x1="810.9" y1="196.4" x2="1390.7" y2="467.3"/>
<line x1="813.9" y1="188.5" x2="1426.2" y2="374.7"/>
<line x1="815.8" y1="180.2" x2="1448.3" y2="278.1"/>
</g>
<path d="M605.7,269.2 L615.0,258.0 L622.2,253.8 L630.4,247.7 L638.6,250.7 L641.6,262.0 L640.6,273.2 L632.0,277.0 L646.7,271.0 L658.9,280.3 L669.1,287.4 L679.3,289.5 L689.5,297.6 L695.6,289.5 L703.7,283.3 L716.0,287.4 L724.1,287.4 L732.3,279.3 L745.5,276.5 L750.0,272.0 L747.0,265.0 L746.0,257.5 L752.0,254.5 L757.0,258.0 L756.0,265.0 L760.0,271.0 L767.0,275.0 L771.0,281.0 L780.9,285.4 L795.2,286.4 L803.3,284.4 L811.5,291.5 L821.7,286.4 L827.8,275.2 L835.9,269.1 L844.1,271.1 L856.3,263.0 L872.6,250.7 L880.7,244.6 L888.9,234.4 L899.1,226.3 L909.3,219.2 L917.4,219.2 L925.6,228.3 L917.4,236.5 L921.5,248.7 L926.6,250.7 L925.6,260.9 L923.5,275.2 L925.6,283.3 L919.4,291.5 L915.5,291.8 L900.2,300.6 L898.0,309.3 L904.6,313.6 L902.4,320.2 L891.5,326.7 L876.2,339.8 L874.0,347.0 L876.0,356.5 L874.0,365.0 L877.9,369.7 L889.2,364.1 L896.8,366.0 L904.4,375.4 L911.9,383.0 L917.6,386.8 L915.7,392.5 L921.4,400.0 L919.5,405.7 L910.0,409.5 L906.2,403.8 L902.5,392.5 L900.6,386.8 L904.4,401.9 L906.2,409.5 L904.4,419.0 L900.6,424.6 L896.8,436.0 L891.1,443.6 L883.5,447.4 L879.8,441.7 L881.6,432.2 L885.4,424.6 L883.5,419.0 L870.3,417.1 L858.9,413.3 L849.5,407.6 L840.0,403.8 L830.1,404.5 L827.8,418.5 L813.8,427.8 L799.8,432.4 L785.9,434.7 L764.9,430.1 L755.6,423.1 L753.3,430.1 L740.0,429.4 L724.3,429.4 L708.3,432.6 L692.2,423.0 L682.6,413.4 L679.4,400.6 L663.4,391.0 L650.6,391.0 L628.2,387.8 L605.7,378.2 L589.7,368.6 L580.1,362.1 L575.3,376.6 L568.9,384.6 L552.9,391.0 L548.1,400.6 L540.0,387.8 L532.0,375.0 L530.4,363.7 L528.8,349.3 L541.7,346.1 L552.9,339.7 L548.1,322.1 L549.7,309.3 L564.1,294.9 L567.3,282.0 L584.9,270.8Z M910.5,299.0 L923.6,297.6 L933.8,307.8 L941.1,328.2 L941.1,336.9 L944.0,345.6 L942.5,357.3 L938.2,358.7 L936.7,352.9 L923.6,338.4 L914.9,329.6 L909.0,320.9 L910.5,306.4Z M541.7,269.2 L551.3,270.0 L551.3,278.8 L543.0,279.0Z M514.4,336.0 L522.0,335.0 L532.0,343.0 L530.0,347.7 L516.0,346.0Z M881.0,225.0 L885.0,224.0 L886.0,228.0 L882.0,229.0Z M904.0,300.0 L924.0,295.5 L927.0,301.0 L912.0,306.0 L905.0,310.0Z M815.6,257.0 L831.9,255.0 L835.9,268.0 L823.7,266.0 L812.0,264.0Z M942.0,304.0 L950.0,302.0 L954.0,306.0 L945.0,309.0Z M931.0,402.0 L941.0,403.0 L942.0,413.0 L933.0,411.0Z" fill="#0d1424" stroke="#0d1424" stroke-width="2" stroke-linejoin="round"/>
<clipPath id="rc"><path d="M605.7,269.2 L615.0,258.0 L622.2,253.8 L630.4,247.7 L638.6,250.7 L641.6,262.0 L640.6,273.2 L632.0,277.0 L646.7,271.0 L658.9,280.3 L669.1,287.4 L679.3,289.5 L689.5,297.6 L695.6,289.5 L703.7,283.3 L716.0,287.4 L724.1,287.4 L732.3,279.3 L745.5,276.5 L750.0,272.0 L747.0,265.0 L746.0,257.5 L752.0,254.5 L757.0,258.0 L756.0,265.0 L760.0,271.0 L767.0,275.0 L771.0,281.0 L780.9,285.4 L795.2,286.4 L803.3,284.4 L811.5,291.5 L821.7,286.4 L827.8,275.2 L835.9,269.1 L844.1,271.1 L856.3,263.0 L872.6,250.7 L880.7,244.6 L888.9,234.4 L899.1,226.3 L909.3,219.2 L917.4,219.2 L925.6,228.3 L917.4,236.5 L921.5,248.7 L926.6,250.7 L925.6,260.9 L923.5,275.2 L925.6,283.3 L919.4,291.5 L915.5,291.8 L900.2,300.6 L898.0,309.3 L904.6,313.6 L902.4,320.2 L891.5,326.7 L876.2,339.8 L874.0,347.0 L876.0,356.5 L874.0,365.0 L877.9,369.7 L889.2,364.1 L896.8,366.0 L904.4,375.4 L911.9,383.0 L917.6,386.8 L915.7,392.5 L921.4,400.0 L919.5,405.7 L910.0,409.5 L906.2,403.8 L902.5,392.5 L900.6,386.8 L904.4,401.9 L906.2,409.5 L904.4,419.0 L900.6,424.6 L896.8,436.0 L891.1,443.6 L883.5,447.4 L879.8,441.7 L881.6,432.2 L885.4,424.6 L883.5,419.0 L870.3,417.1 L858.9,413.3 L849.5,407.6 L840.0,403.8 L830.1,404.5 L827.8,418.5 L813.8,427.8 L799.8,432.4 L785.9,434.7 L764.9,430.1 L755.6,423.1 L753.3,430.1 L740.0,429.4 L724.3,429.4 L708.3,432.6 L692.2,423.0 L682.6,413.4 L679.4,400.6 L663.4,391.0 L650.6,391.0 L628.2,387.8 L605.7,378.2 L589.7,368.6 L580.1,362.1 L575.3,376.6 L568.9,384.6 L552.9,391.0 L548.1,400.6 L540.0,387.8 L532.0,375.0 L530.4,363.7 L528.8,349.3 L541.7,346.1 L552.9,339.7 L548.1,322.1 L549.7,309.3 L564.1,294.9 L567.3,282.0 L584.9,270.8Z"/><path d="M910.5,299.0 L923.6,297.6 L933.8,307.8 L941.1,328.2 L941.1,336.9 L944.0,345.6 L942.5,357.3 L938.2,358.7 L936.7,352.9 L923.6,338.4 L914.9,329.6 L909.0,320.9 L910.5,306.4Z"/><path d="M541.7,269.2 L551.3,270.0 L551.3,278.8 L543.0,279.0Z"/><path d="M514.4,336.0 L522.0,335.0 L532.0,343.0 L530.0,347.7 L516.0,346.0Z"/><path d="M881.0,225.0 L885.0,224.0 L886.0,228.0 L882.0,229.0Z"/><path d="M904.0,300.0 L924.0,295.5 L927.0,301.0 L912.0,306.0 L905.0,310.0Z"/><path d="M815.6,257.0 L831.9,255.0 L835.9,268.0 L823.7,266.0 L812.0,264.0Z"/><path d="M942.0,304.0 L950.0,302.0 L954.0,306.0 L945.0,309.0Z"/><path d="M931.0,402.0 L941.0,403.0 L942.0,413.0 L933.0,411.0Z"/></clipPath>
<g clip-path="url(#rc)">
<rect x="505" y="215" width="447" height="273" fill="#7a8cb4"/>
<path d="M699.5,171.0 a57.0,57.0 0 1,0 114.0,0 a57.0,57.0 0 1,0 -114.0,0 M696.5,171.0 a60.0,60.0 0 1,0 120.0,0 a60.0,60.0 0 1,0 -120.0,0 M693.5,171.0 a63.0,63.0 0 1,0 126.0,0 a63.0,63.0 0 1,0 -126.0,0 M690.5,171.0 a66.0,66.0 0 1,0 132.0,0 a66.0,66.0 0 1,0 -132.0,0 M687.5,171.0 a69.0,69.0 0 1,0 138.0,0 a69.0,69.0 0 1,0 -138.0,0 M684.5,171.0 a72.0,72.0 0 1,0 144.0,0 a72.0,72.0 0 1,0 -144.0,0 M681.5,171.0 a75.0,75.0 0 1,0 150.0,0 a75.0,75.0 0 1,0 -150.0,0 M678.5,171.0 a78.0,78.0 0 1,0 156.0,0 a78.0,78.0 0 1,0 -156.0,0 M675.5,171.0 a81.0,81.0 0 1,0 162.0,0 a81.0,81.0 0 1,0 -162.0,0 M672.5,171.0 a84.0,84.0 0 1,0 168.0,0 a84.0,84.0 0 1,0 -168.0,0 M669.5,171.0 a87.0,87.0 0 1,0 174.0,0 a87.0,87.0 0 1,0 -174.0,0 M666.5,171.0 a90.0,90.0 0 1,0 180.0,0 a90.0,90.0 0 1,0 -180.0,0 M663.5,171.0 a93.0,93.0 0 1,0 186.0,0 a93.0,93.0 0 1,0 -186.0,0 M660.5,171.0 a96.0,96.0 0 1,0 192.0,0 a96.0,96.0 0 1,0 -192.0,0 M657.5,171.0 a99.0,99.0 0 1,0 198.0,0 a99.0,99.0 0 1,0 -198.0,0 M654.5,171.0 a102.0,102.0 0 1,0 204.0,0 a102.0,102.0 0 1,0 -204.0,0 M651.5,171.0 a105.0,105.0 0 1,0 210.0,0 a105.0,105.0 0 1,0 -210.0,0 M648.5,171.0 a108.0,108.0 0 1,0 216.0,0 a108.0,108.0 0 1,0 -216.0,0 M645.5,171.0 a111.0,111.0 0 1,0 222.0,0 a111.0,111.0 0 1,0 -222.0,0 M642.5,171.0 a114.0,114.0 0 1,0 228.0,0 a114.0,114.0 0 1,0 -228.0,0 M639.5,171.0 a117.0,117.0 0 1,0 234.0,0 a117.0,117.0 0 1,0 -234.0,0 M636.5,171.0 a120.0,120.0 0 1,0 240.0,0 a120.0,120.0 0 1,0 -240.0,0 M633.5,171.0 a123.0,123.0 0 1,0 246.0,0 a123.0,123.0 0 1,0 -246.0,0 M630.5,171.0 a126.0,126.0 0 1,0 252.0,0 a126.0,126.0 0 1,0 -252.0,0 M627.5,171.0 a129.0,129.0 0 1,0 258.0,0 a129.0,129.0 0 1,0 -258.0,0 M624.5,171.0 a132.0,132.0 0 1,0 264.0,0 a132.0,132.0 0 1,0 -264.0,0 M621.5,171.0 a135.0,135.0 0 1,0 270.0,0 a135.0,135.0 0 1,0 -270.0,0 M618.5,171.0 a138.0,138.0 0 1,0 276.0,0 a138.0,138.0 0 1,0 -276.0,0 M615.5,171.0 a141.0,141.0 0 1,0 282.0,0 a141.0,141.0 0 1,0 -282.0,0 M612.5,171.0 a144.0,144.0 0 1,0 288.0,0 a144.0,144.0 0 1,0 -288.0,0 M609.5,171.0 a147.0,147.0 0 1,0 294.0,0 a147.0,147.0 0 1,0 -294.0,0 M606.5,171.0 a150.0,150.0 0 1,0 300.0,0 a150.0,150.0 0 1,0 -300.0,0 M603.5,171.0 a153.0,153.0 0 1,0 306.0,0 a153.0,153.0 0 1,0 -306.0,0 M600.5,171.0 a156.0,156.0 0 1,0 312.0,0 a156.0,156.0 0 1,0 -312.0,0 M597.5,171.0 a159.0,159.0 0 1,0 318.0,0 a159.0,159.0 0 1,0 -318.0,0 M594.5,171.0 a162.0,162.0 0 1,0 324.0,0 a162.0,162.0 0 1,0 -324.0,0 M591.5,171.0 a165.0,165.0 0 1,0 330.0,0 a165.0,165.0 0 1,0 -330.0,0 M588.5,171.0 a168.0,168.0 0 1,0 336.0,0 a168.0,168.0 0 1,0 -336.0,0 M585.5,171.0 a171.0,171.0 0 1,0 342.0,0 a171.0,171.0 0 1,0 -342.0,0 M582.5,171.0 a174.0,174.0 0 1,0 348.0,0 a174.0,174.0 0 1,0 -348.0,0 M579.5,171.0 a177.0,177.0 0 1,0 354.0,0 a177.0,177.0 0 1,0 -354.0,0 M576.5,171.0 a180.0,180.0 0 1,0 360.0,0 a180.0,180.0 0 1,0 -360.0,0 M573.5,171.0 a183.0,183.0 0 1,0 366.0,0 a183.0,183.0 0 1,0 -366.0,0 M570.5,171.0 a186.0,186.0 0 1,0 372.0,0 a186.0,186.0 0 1,0 -372.0,0 M567.5,171.0 a189.0,189.0 0 1,0 378.0,0 a189.0,189.0 0 1,0 -378.0,0 M564.5,171.0 a192.0,192.0 0 1,0 384.0,0 a192.0,192.0 0 1,0 -384.0,0 M561.5,171.0 a195.0,195.0 0 1,0 390.0,0 a195.0,195.0 0 1,0 -390.0,0 M558.5,171.0 a198.0,198.0 0 1,0 396.0,0 a198.0,198.0 0 1,0 -396.0,0 M555.5,171.0 a201.0,201.0 0 1,0 402.0,0 a201.0,201.0 0 1,0 -402.0,0 M552.5,171.0 a204.0,204.0 0 1,0 408.0,0 a204.0,204.0 0 1,0 -408.0,0 M549.5,171.0 a207.0,207.0 0 1,0 414.0,0 a207.0,207.0 0 1,0 -414.0,0 M546.5,171.0 a210.0,210.0 0 1,0 420.0,0 a210.0,210.0 0 1,0 -420.0,0 M543.5,171.0 a213.0,213.0 0 1,0 426.0,0 a213.0,213.0 0 1,0 -426.0,0 M540.5,171.0 a216.0,216.0 0 1,0 432.0,0 a216.0,216.0 0 1,0 -432.0,0 M537.5,171.0 a219.0,219.0 0 1,0 438.0,0 a219.0,219.0 0 1,0 -438.0,0 M534.5,171.0 a222.0,222.0 0 1,0 444.0,0 a222.0,222.0 0 1,0 -444.0,0 M531.5,171.0 a225.0,225.0 0 1,0 450.0,0 a225.0,225.0 0 1,0 -450.0,0 M528.5,171.0 a228.0,228.0 0 1,0 456.0,0 a228.0,228.0 0 1,0 -456.0,0 M525.5,171.0 a231.0,231.0 0 1,0 462.0,0 a231.0,231.0 0 1,0 -462.0,0 M522.5,171.0 a234.0,234.0 0 1,0 468.0,0 a234.0,234.0 0 1,0 -468.0,0 M519.5,171.0 a237.0,237.0 0 1,0 474.0,0 a237.0,237.0 0 1,0 -474.0,0 M516.5,171.0 a240.0,240.0 0 1,0 480.0,0 a240.0,240.0 0 1,0 -480.0,0 M513.5,171.0 a243.0,243.0 0 1,0 486.0,0 a243.0,243.0 0 1,0 -486.0,0 M510.5,171.0 a246.0,246.0 0 1,0 492.0,0 a246.0,246.0 0 1,0 -492.0,0 M507.5,171.0 a249.0,249.0 0 1,0 498.0,0 a249.0,249.0 0 1,0 -498.0,0 M504.5,171.0 a252.0,252.0 0 1,0 504.0,0 a252.0,252.0 0 1,0 -504.0,0 M501.5,171.0 a255.0,255.0 0 1,0 510.0,0 a255.0,255.0 0 1,0 -510.0,0 M498.5,171.0 a258.0,258.0 0 1,0 516.0,0 a258.0,258.0 0 1,0 -516.0,0 M495.5,171.0 a261.0,261.0 0 1,0 522.0,0 a261.0,261.0 0 1,0 -522.0,0 M492.5,171.0 a264.0,264.0 0 1,0 528.0,0 a264.0,264.0 0 1,0 -528.0,0 M489.5,171.0 a267.0,267.0 0 1,0 534.0,0 a267.0,267.0 0 1,0 -534.0,0 M486.5,171.0 a270.0,270.0 0 1,0 540.0,0 a270.0,270.0 0 1,0 -540.0,0 M483.5,171.0 a273.0,273.0 0 1,0 546.0,0 a273.0,273.0 0 1,0 -546.0,0 M480.5,171.0 a276.0,276.0 0 1,0 552.0,0 a276.0,276.0 0 1,0 -552.0,0 M477.5,171.0 a279.0,279.0 0 1,0 558.0,0 a279.0,279.0 0 1,0 -558.0,0 M474.5,171.0 a282.0,282.0 0 1,0 564.0,0 a282.0,282.0 0 1,0 -564.0,0 M471.5,171.0 a285.0,285.0 0 1,0 570.0,0 a285.0,285.0 0 1,0 -570.0,0 M468.5,171.0 a288.0,288.0 0 1,0 576.0,0 a288.0,288.0 0 1,0 -576.0,0 M465.5,171.0 a291.0,291.0 0 1,0 582.0,0 a291.0,291.0 0 1,0 -582.0,0 M462.5,171.0 a294.0,294.0 0 1,0 588.0,0 a294.0,294.0 0 1,0 -588.0,0 M459.5,171.0 a297.0,297.0 0 1,0 594.0,0 a297.0,297.0 0 1,0 -594.0,0 M456.5,171.0 a300.0,300.0 0 1,0 600.0,0 a300.0,300.0 0 1,0 -600.0,0 M453.5,171.0 a303.0,303.0 0 1,0 606.0,0 a303.0,303.0 0 1,0 -606.0,0 M450.5,171.0 a306.0,306.0 0 1,0 612.0,0 a306.0,306.0 0 1,0 -612.0,0 M447.5,171.0 a309.0,309.0 0 1,0 618.0,0 a309.0,309.0 0 1,0 -618.0,0 M444.5,171.0 a312.0,312.0 0 1,0 624.0,0 a312.0,312.0 0 1,0 -624.0,0 M441.5,171.0 a315.0,315.0 0 1,0 630.0,0 a315.0,315.0 0 1,0 -630.0,0 M438.5,171.0 a318.0,318.0 0 1,0 636.0,0 a318.0,318.0 0 1,0 -636.0,0 M435.5,171.0 a321.0,321.0 0 1,0 642.0,0 a321.0,321.0 0 1,0 -642.0,0 M432.5,171.0 a324.0,324.0 0 1,0 648.0,0 a324.0,324.0 0 1,0 -648.0,0 M429.5,171.0 a327.0,327.0 0 1,0 654.0,0 a327.0,327.0 0 1,0 -654.0,0 M426.5,171.0 a330.0,330.0 0 1,0 660.0,0 a330.0,330.0 0 1,0 -660.0,0 M423.5,171.0 a333.0,333.0 0 1,0 666.0,0 a333.0,333.0 0 1,0 -666.0,0 M420.5,171.0 a336.0,336.0 0 1,0 672.0,0 a336.0,336.0 0 1,0 -672.0,0 M417.5,171.0 a339.0,339.0 0 1,0 678.0,0 a339.0,339.0 0 1,0 -678.0,0 M414.5,171.0 a342.0,342.0 0 1,0 684.0,0 a342.0,342.0 0 1,0 -684.0,0 M411.5,171.0 a345.0,345.0 0 1,0 690.0,0 a345.0,345.0 0 1,0 -690.0,0 M408.5,171.0 a348.0,348.0 0 1,0 696.0,0 a348.0,348.0 0 1,0 -696.0,0 M405.5,171.0 a351.0,351.0 0 1,0 702.0,0 a351.0,351.0 0 1,0 -702.0,0 M402.5,171.0 a354.0,354.0 0 1,0 708.0,0 a354.0,354.0 0 1,0 -708.0,0 M399.5,171.0 a357.0,357.0 0 1,0 714.0,0 a357.0,357.0 0 1,0 -714.0,0 M396.5,171.0 a360.0,360.0 0 1,0 720.0,0 a360.0,360.0 0 1,0 -720.0,0 M393.5,171.0 a363.0,363.0 0 1,0 726.0,0 a363.0,363.0 0 1,0 -726.0,0 M390.5,171.0 a366.0,366.0 0 1,0 732.0,0 a366.0,366.0 0 1,0 -732.0,0 M387.5,171.0 a369.0,369.0 0 1,0 738.0,0 a369.0,369.0 0 1,0 -738.0,0 M384.5,171.0 a372.0,372.0 0 1,0 744.0,0 a372.0,372.0 0 1,0 -744.0,0 M381.5,171.0 a375.0,375.0 0 1,0 750.0,0 a375.0,375.0 0 1,0 -750.0,0 M378.5,171.0 a378.0,378.0 0 1,0 756.0,0 a378.0,378.0 0 1,0 -756.0,0 M375.5,171.0 a381.0,381.0 0 1,0 762.0,0 a381.0,381.0 0 1,0 -762.0,0 M372.5,171.0 a384.0,384.0 0 1,0 768.0,0 a384.0,384.0 0 1,0 -768.0,0 M369.5,171.0 a387.0,387.0 0 1,0 774.0,0 a387.0,387.0 0 1,0 -774.0,0 M366.5,171.0 a390.0,390.0 0 1,0 780.0,0 a390.0,390.0 0 1,0 -780.0,0 M363.5,171.0 a393.0,393.0 0 1,0 786.0,0 a393.0,393.0 0 1,0 -786.0,0 M360.5,171.0 a396.0,396.0 0 1,0 792.0,0 a396.0,396.0 0 1,0 -792.0,0 M357.5,171.0 a399.0,399.0 0 1,0 798.0,0 a399.0,399.0 0 1,0 -798.0,0 M354.5,171.0 a402.0,402.0 0 1,0 804.0,0 a402.0,402.0 0 1,0 -804.0,0 M351.5,171.0 a405.0,405.0 0 1,0 810.0,0 a405.0,405.0 0 1,0 -810.0,0 M348.5,171.0 a408.0,408.0 0 1,0 816.0,0 a408.0,408.0 0 1,0 -816.0,0 M345.5,171.0 a411.0,411.0 0 1,0 822.0,0 a411.0,411.0 0 1,0 -822.0,0 M342.5,171.0 a414.0,414.0 0 1,0 828.0,0 a414.0,414.0 0 1,0 -828.0,0 M339.5,171.0 a417.0,417.0 0 1,0 834.0,0 a417.0,417.0 0 1,0 -834.0,0" fill="none" stroke="#0d1424" stroke-width="1.35"/>
<path d="M701.3,185.1L674.1,192.0M701.6,186.4L674.7,194.0M702.0,187.8L675.3,196.0M702.4,189.1L675.9,198.0M702.9,190.4L676.6,199.9M703.4,191.7L677.3,201.8M703.9,193.0L678.1,203.7M704.4,194.2L678.9,205.6M705.0,195.5L679.7,207.5M705.6,196.7L680.6,209.4M706.3,197.9L681.6,211.2M706.9,199.2L682.6,213.0M707.6,200.3L683.6,214.8M708.4,201.5L684.7,216.5M709.1,202.7L685.8,218.2M709.9,203.8L687.0,219.9M710.7,204.9L688.2,221.6M711.5,206.0L689.5,223.2M712.4,207.1L690.7,224.9M713.3,208.2L692.1,226.4M714.2,209.2L693.4,228.0M715.1,210.2L694.8,229.5M716.1,211.2L696.3,231.0M717.1,212.2L697.7,232.4M718.1,213.1L699.2,233.8M719.1,214.0L700.8,235.2M720.2,214.9L702.3,236.5M721.3,215.8L704.0,237.8M722.4,216.6L705.6,239.1M723.5,217.5L707.3,240.3M724.6,218.2L708.9,241.5M725.8,219.0L710.7,242.6M726.9,219.7L712.4,243.7M728.1,220.4L714.2,244.7M729.3,221.1L716.0,245.7M730.6,221.8L717.8,246.7M731.8,222.4L719.7,247.6M733.0,222.9L721.5,248.5M734.3,223.5L723.4,249.3M735.6,224.0L725.3,250.1M736.9,224.5L727.2,250.8M738.2,225.0L729.2,251.5M739.5,225.4L731.1,252.1M740.8,225.8L733.1,252.7M742.2,226.2L735.1,253.3M743.5,226.5L737.1,253.8M744.8,226.8L739.1,254.2M746.2,227.1L741.1,254.6M747.6,227.3L743.2,254.9M748.9,227.5L745.2,255.2M750.3,227.7L747.2,255.5M751.7,227.8L749.3,255.7M753.0,227.9L751.4,255.8M754.4,228.0L753.4,255.9M755.8,228.0L755.5,256.0M757.2,228.0L757.5,256.0M758.6,228.0L759.6,255.9M760.0,227.9L761.6,255.8M761.3,227.8L763.7,255.7M762.7,227.7L765.8,255.5M764.1,227.5L767.8,255.2M765.4,227.3L769.8,254.9M766.8,227.1L771.9,254.6M768.2,226.8L773.9,254.2M769.5,226.5L775.9,253.8M770.8,226.2L777.9,253.3M772.2,225.8L779.9,252.7M773.5,225.4L781.9,252.1M774.8,225.0L783.8,251.5M776.1,224.5L785.8,250.8M777.4,224.0L787.7,250.1M778.7,223.5L789.6,249.3M780.0,222.9L791.5,248.5M781.2,222.4L793.3,247.6M782.4,221.8L795.2,246.7M783.7,221.1L797.0,245.7M784.9,220.4L798.8,244.7M786.1,219.7L800.6,243.7M787.2,219.0L802.3,242.6M788.4,218.2L804.1,241.5M789.5,217.5L805.7,240.3M790.6,216.6L807.4,239.1M791.7,215.8L809.0,237.8M792.8,214.9L810.7,236.5M793.9,214.0L812.2,235.2M794.9,213.1L813.8,233.8M795.9,212.2L815.3,232.4M796.9,211.2L816.7,231.0M797.9,210.2L818.2,229.5M798.8,209.2L819.6,228.0M799.7,208.2L820.9,226.4M800.6,207.1L822.3,224.9M801.5,206.0L823.5,223.2M802.3,204.9L824.8,221.6M803.1,203.8L826.0,219.9M803.9,202.7L827.2,218.2M804.6,201.5L828.3,216.5M805.4,200.3L829.4,214.8M806.1,199.2L830.4,213.0M806.7,197.9L831.4,211.2M807.4,196.7L832.4,209.4M808.0,195.5L833.3,207.5M808.6,194.2L834.1,205.6M809.1,193.0L834.9,203.7M809.6,191.7L835.7,201.8M810.1,190.4L836.4,199.9M810.6,189.1L837.1,198.0M811.0,187.8L837.7,196.0M811.4,186.4L838.3,194.0M811.7,185.1L838.9,192.0M674.0,191.6L644.9,198.9M674.5,193.2L645.5,201.1M674.9,194.8L646.1,203.2M675.4,196.3L646.7,205.3M675.9,197.9L647.4,207.4M676.4,199.4L648.1,209.4M676.9,200.9L648.9,211.5M677.5,202.4L649.7,213.5M678.1,203.9L650.5,215.6M678.8,205.4L651.4,217.6M679.5,206.9L652.3,219.6M680.2,208.4L653.2,221.6M680.9,209.8L654.2,223.5M681.6,211.2L655.2,225.5M682.4,212.7L656.3,227.4M683.2,214.1L657.4,229.3M684.1,215.5L658.5,231.2M684.9,216.8L659.7,233.0M685.8,218.2L660.9,234.8M686.7,219.5L662.1,236.7M687.7,220.9L663.4,238.5M688.6,222.2L664.7,240.2M689.6,223.4L666.0,242.0M690.6,224.7L667.4,243.7M691.7,226.0L668.8,245.4M692.7,227.2L670.2,247.0M693.8,228.4L671.7,248.6M694.9,229.6L673.2,250.2M696.0,230.7L674.7,251.8M697.2,231.9L676.2,253.4M698.4,233.0L677.8,254.9M699.5,234.1L679.4,256.4M700.8,235.2L681.1,257.8M702.0,236.2L682.8,259.2M703.2,237.3L684.5,260.6M704.5,238.3L686.2,262.0M705.8,239.2L687.9,263.3M707.1,240.2L689.7,264.6M708.5,241.1L691.5,265.9M709.8,242.0L693.3,267.1M711.2,242.9L695.2,268.3M712.5,243.8L697.0,269.4M713.9,244.6L698.9,270.5M715.3,245.4L700.8,271.6M716.8,246.1L702.8,272.7M718.2,246.9L704.7,273.7M719.7,247.6L706.7,274.6M721.1,248.3L708.7,275.6M722.6,249.0L710.7,276.5M724.1,249.6L712.7,277.3M725.6,250.2L714.7,278.1M727.1,250.8L716.8,278.9M728.7,251.3L718.8,279.7M730.2,251.8L720.9,280.4M731.7,252.3L723.0,281.0M733.3,252.8L725.1,281.6M734.9,253.2L727.2,282.2M736.4,253.6L729.3,282.7M738.0,254.0L731.5,283.2M739.6,254.3L733.6,283.7M741.2,254.6L735.8,284.1M742.8,254.9L737.9,284.5M744.4,255.1L740.1,284.8M746.0,255.3L742.3,285.1M747.6,255.5L744.5,285.4M749.2,255.7L746.6,285.6M750.8,255.8L748.8,285.7M752.4,255.9L751.0,285.9M754.1,256.0L753.2,286.0M755.7,256.0L755.4,286.0M757.3,256.0L757.6,286.0M758.9,256.0L759.8,286.0M760.6,255.9L762.0,285.9M762.2,255.8L764.2,285.7M763.8,255.7L766.4,285.6M765.4,255.5L768.5,285.4M767.0,255.3L770.7,285.1M768.6,255.1L772.9,284.8M770.2,254.9L775.1,284.5M771.8,254.6L777.2,284.1M773.4,254.3L779.4,283.7M775.0,254.0L781.5,283.2M776.6,253.6L783.7,282.7M778.1,253.2L785.8,282.2M779.7,252.8L787.9,281.6M781.3,252.3L790.0,281.0M782.8,251.8L792.1,280.4M784.3,251.3L794.2,279.7M785.9,250.8L796.2,278.9M787.4,250.2L798.3,278.1M788.9,249.6L800.3,277.3M790.4,249.0L802.3,276.5M791.9,248.3L804.3,275.6M793.3,247.6L806.3,274.6M794.8,246.9L808.3,273.7M796.2,246.1L810.2,272.7M797.7,245.4L812.2,271.6M799.1,244.6L814.1,270.5M800.5,243.8L816.0,269.4M801.8,242.9L817.8,268.3M803.2,242.0L819.7,267.1M804.5,241.1L821.5,265.9M805.9,240.2L823.3,264.6M807.2,239.2L825.1,263.3M808.5,238.3L826.8,262.0M809.8,237.3L828.5,260.6M811.0,236.2L830.2,259.2M812.2,235.2L831.9,257.8M813.5,234.1L833.6,256.4M814.6,233.0L835.2,254.9M815.8,231.9L836.8,253.4M817.0,230.7L838.3,251.8M818.1,229.6L839.8,250.2M819.2,228.4L841.3,248.6M820.3,227.2L842.8,247.0M821.3,226.0L844.2,245.4M822.4,224.7L845.6,243.7M823.4,223.4L847.0,242.0M824.4,222.2L848.3,240.2M825.3,220.9L849.6,238.5M826.3,219.5L850.9,236.7M827.2,218.2L852.1,234.8M828.1,216.8L853.3,233.0M828.9,215.5L854.5,231.2M829.8,214.1L855.6,229.3M830.6,212.7L856.7,227.4M831.4,211.2L857.8,225.5M832.1,209.8L858.8,223.5M832.8,208.4L859.8,221.6M833.5,206.9L860.7,219.6M834.2,205.4L861.6,217.6M834.9,203.9L862.5,215.6M835.5,202.4L863.3,213.5M836.1,200.9L864.1,211.5M836.6,199.4L864.9,209.4M837.1,197.9L865.6,207.4M837.6,196.3L866.3,205.3M838.1,194.8L866.9,203.2M838.5,193.2L867.5,201.1M839.0,191.6L868.1,198.9M645.2,199.9L616.2,207.5M645.7,201.7L616.8,209.7M646.2,203.5L617.4,212.0M646.7,205.3L618.1,214.2M647.3,207.1L618.8,216.5M647.9,208.8L619.6,218.7M648.5,210.6L620.3,220.9M649.2,212.3L621.2,223.1M649.9,214.0L622.0,225.3M650.6,215.7L622.9,227.4M651.3,217.5L623.9,229.6M652.1,219.1L624.8,231.7M652.9,220.8L625.8,233.8M653.7,222.5L626.8,235.9M654.5,224.1L627.9,238.0M655.4,225.8L629.0,240.1M656.3,227.4L630.1,242.1M657.2,229.0L631.3,244.2M658.2,230.6L632.5,246.2M659.1,232.2L633.7,248.2M660.1,233.8L635.0,250.1M661.2,235.3L636.3,252.1M662.2,236.8L637.6,254.0M663.3,238.4L639.0,255.9M664.4,239.9L640.4,257.8M665.5,241.3L641.8,259.7M666.7,242.8L643.2,261.5M667.8,244.2L644.7,263.3M669.0,245.7L646.2,265.1M670.2,247.1L647.7,266.9M671.5,248.4L649.3,268.7M672.8,249.8L650.9,270.4M674.0,251.2L652.5,272.1M675.3,252.5L654.2,273.7M676.7,253.8L655.8,275.4M678.0,255.1L657.5,277.0M679.4,256.3L659.3,278.6M680.8,257.5L661.0,280.1M682.2,258.8L662.8,281.7M683.6,259.9L664.6,283.1M685.1,261.1L666.4,284.6M686.5,262.3L668.3,286.1M688.0,263.4L670.1,287.5M689.5,264.5L672.0,288.9M691.0,265.5L673.9,290.2M692.6,266.6L675.9,291.5M694.1,267.6L677.8,292.8M695.7,268.6L679.8,294.1M697.3,269.6L681.8,295.3M698.9,270.5L683.8,296.5M700.5,271.4L685.9,297.6M702.1,272.3L687.9,298.8M703.7,273.2L690.0,299.8M705.4,274.0L692.1,300.9M707.1,274.8L694.2,301.9M708.8,275.6L696.3,302.9M710.5,276.4L698.4,303.9M712.2,277.1L700.6,304.8M713.9,277.8L702.8,305.7M715.6,278.5L705.0,306.5M717.4,279.1L707.1,307.3M719.1,279.8L709.4,308.1M720.9,280.3L711.6,308.9M722.6,280.9L713.8,309.6M724.4,281.4L716.1,310.2M726.2,281.9L718.3,310.9M728.0,282.4L720.6,311.5M729.8,282.9L722.8,312.0M731.6,283.3L725.1,312.6M733.4,283.7L727.4,313.1M735.3,284.0L729.7,313.5M737.1,284.3L732.0,313.9M738.9,284.6L734.3,314.3M740.8,284.9L736.7,314.6M742.6,285.2L739.0,314.9M744.4,285.4L741.3,315.2M746.3,285.5L743.6,315.4M748.1,285.7L746.0,315.6M750.0,285.8L748.3,315.8M751.9,285.9L750.6,315.9M753.7,286.0L753.0,316.0M755.6,286.0L755.3,316.0M757.4,286.0L757.7,316.0M759.3,286.0L760.0,316.0M761.1,285.9L762.4,315.9M763.0,285.8L764.7,315.8M764.9,285.7L767.0,315.6M766.7,285.5L769.4,315.4M768.6,285.4L771.7,315.2M770.4,285.2L774.0,314.9M772.2,284.9L776.3,314.6M774.1,284.6L778.7,314.3M775.9,284.3L781.0,313.9M777.7,284.0L783.3,313.5M779.6,283.7L785.6,313.1M781.4,283.3L787.9,312.6M783.2,282.9L790.2,312.0M785.0,282.4L792.4,311.5M786.8,281.9L794.7,310.9M788.6,281.4L796.9,310.2M790.4,280.9L799.2,309.6M792.1,280.3L801.4,308.9M793.9,279.8L803.6,308.1M795.6,279.1L805.9,307.3M797.4,278.5L808.0,306.5M799.1,277.8L810.2,305.7M800.8,277.1L812.4,304.8M802.5,276.4L814.6,303.9M804.2,275.6L816.7,302.9M805.9,274.8L818.8,301.9M807.6,274.0L820.9,300.9M809.3,273.2L823.0,299.8M810.9,272.3L825.1,298.8M812.5,271.4L827.1,297.6M814.1,270.5L829.2,296.5M815.7,269.6L831.2,295.3M817.3,268.6L833.2,294.1M818.9,267.6L835.2,292.8M820.4,266.6L837.1,291.5M822.0,265.5L839.1,290.2M823.5,264.5L841.0,288.9M825.0,263.4L842.9,287.5M826.5,262.3L844.7,286.1M827.9,261.1L846.6,284.6M829.4,259.9L848.4,283.1M830.8,258.8L850.2,281.7M832.2,257.5L852.0,280.1M833.6,256.3L853.7,278.6M835.0,255.1L855.5,277.0M836.3,253.8L857.2,275.4M837.7,252.5L858.8,273.7M839.0,251.2L860.5,272.1M840.2,249.8L862.1,270.4M841.5,248.4L863.7,268.7M842.8,247.1L865.3,266.9M844.0,245.7L866.8,265.1M845.2,244.2L868.3,263.3M846.3,242.8L869.8,261.5M847.5,241.3L871.2,259.7M848.6,239.9L872.6,257.8M849.7,238.4L874.0,255.9M850.8,236.8L875.4,254.0M851.8,235.3L876.7,252.1M852.9,233.8L878.0,250.1M853.9,232.2L879.3,248.2M854.8,230.6L880.5,246.2M855.8,229.0L881.7,244.2M856.7,227.4L882.9,242.1M857.6,225.8L884.0,240.1M858.5,224.1L885.1,238.0M859.3,222.5L886.2,235.9M860.1,220.8L887.2,233.8M860.9,219.1L888.2,231.7M861.7,217.5L889.1,229.6M862.4,215.7L890.1,227.4M863.1,214.0L891.0,225.3M863.8,212.3L891.8,223.1M864.5,210.6L892.7,220.9M865.1,208.8L893.4,218.7M865.7,207.1L894.2,216.5M866.3,205.3L894.9,214.2M866.8,203.5L895.6,212.0M867.3,201.7L896.2,209.7M867.8,199.9L896.8,207.5M616.2,207.8L582.4,216.7M616.8,209.8L583.1,219.1M617.3,211.8L583.8,221.6M617.9,213.7L584.5,224.0M618.6,215.7L585.3,226.5M619.2,217.6L586.1,228.9M619.9,219.6L586.9,231.3M620.6,221.5L587.8,233.7M621.3,223.5L588.7,236.1M622.1,225.4L589.6,238.5M622.9,227.3L590.6,240.9M623.7,229.2L591.6,243.2M624.5,231.0L592.7,245.5M625.4,232.9L593.7,247.9M626.3,234.8L594.8,250.2M627.2,236.6L596.0,252.5M628.1,238.4L597.2,254.7M629.1,240.3L598.4,257.0M630.1,242.1L599.6,259.2M631.1,243.9L600.9,261.4M632.2,245.6L602.2,263.6M633.3,247.4L603.5,265.8M634.4,249.1L604.9,268.0M635.5,250.9L606.3,270.1M636.6,252.6L607.7,272.3M637.8,254.3L609.1,274.4M639.0,255.9L610.6,276.5M640.2,257.6L612.1,278.5M641.4,259.3L613.7,280.6M642.7,260.9L615.2,282.6M644.0,262.5L616.8,284.6M645.3,264.1L618.5,286.5M646.6,265.6L620.1,288.5M648.0,267.2L621.8,290.4M649.4,268.7L623.5,292.3M650.8,270.2L625.3,294.2M652.2,271.7L627.0,296.0M653.6,273.2L628.8,297.9M655.1,274.7L630.6,299.7M656.6,276.1L632.5,301.4M658.1,277.5L634.3,303.2M659.6,278.9L636.2,304.9M661.2,280.2L638.1,306.6M662.7,281.6L640.1,308.3M664.3,282.9L642.0,309.9M665.9,284.2L644.0,311.5M667.5,285.5L646.0,313.1M669.2,286.7L648.1,314.7M670.8,288.0L650.1,316.2M672.5,289.2L652.2,317.7M674.2,290.4L654.3,319.2M675.9,291.5L656.4,320.6M677.6,292.6L658.5,322.0M679.3,293.8L660.7,323.4M681.1,294.8L662.9,324.7M682.8,295.9L665.1,326.0M684.6,296.9L667.3,327.3M686.4,297.9L669.5,328.6M688.2,298.9L671.8,329.8M690.1,299.9L674.0,331.0M691.9,300.8L676.3,332.1M693.7,301.7L678.6,333.3M695.6,302.6L680.9,334.4M697.5,303.4L683.2,335.4M699.4,304.3L685.6,336.4M701.3,305.1L687.9,337.4M703.2,305.8L690.3,338.4M705.1,306.6L692.7,339.3M707.0,307.3L695.1,340.2M709.0,308.0L697.5,341.1M710.9,308.7L699.9,341.9M712.9,309.3L702.4,342.7M714.9,309.9L704.8,343.4M716.8,310.5L707.3,344.1M718.8,311.0L709.7,344.8M720.8,311.5L712.2,345.5M722.8,312.0L714.7,346.1M724.8,312.5L717.2,346.7M726.8,312.9L719.7,347.2M728.9,313.3L722.2,347.7M730.9,313.7L724.7,348.2M732.9,314.1L727.2,348.6M734.9,314.4L729.7,349.0M737.0,314.7L732.3,349.4M739.0,314.9L734.8,349.7M741.1,315.2L737.4,350.0M743.1,315.4L739.9,350.2M745.2,315.6L742.4,350.5M747.2,315.7L745.0,350.6M749.3,315.8L747.6,350.8M751.4,315.9L750.1,350.9M753.4,316.0L752.7,351.0M755.5,316.0L755.2,351.0M757.5,316.0L757.8,351.0M759.6,316.0L760.3,351.0M761.6,315.9L762.9,350.9M763.7,315.8L765.4,350.8M765.8,315.7L768.0,350.6M767.8,315.6L770.6,350.5M769.9,315.4L773.1,350.2M771.9,315.2L775.6,350.0M774.0,314.9L778.2,349.7M776.0,314.7L780.7,349.4M778.1,314.4L783.3,349.0M780.1,314.1L785.8,348.6M782.1,313.7L788.3,348.2M784.1,313.3L790.8,347.7M786.2,312.9L793.3,347.2M788.2,312.5L795.8,346.7M790.2,312.0L798.3,346.1M792.2,311.5L800.8,345.5M794.2,311.0L803.3,344.8M796.2,310.5L805.7,344.1M798.1,309.9L808.2,343.4M800.1,309.3L810.6,342.7M802.1,308.7L813.1,341.9M804.0,308.0L815.5,341.1M806.0,307.3L817.9,340.2M807.9,306.6L820.3,339.3M809.8,305.8L822.7,338.4M811.7,305.1L825.1,337.4M813.6,304.3L827.4,336.4M815.5,303.4L829.8,335.4M817.4,302.6L832.1,334.4M819.3,301.7L834.4,333.3M821.1,300.8L836.7,332.1M822.9,299.9L839.0,331.0M824.8,298.9L841.2,329.8M826.6,297.9L843.5,328.6M828.4,296.9L845.7,327.3M830.2,295.9L847.9,326.0M831.9,294.8L850.1,324.7M833.7,293.8L852.3,323.4M835.4,292.6L854.5,322.0M837.1,291.5L856.6,320.6M838.8,290.4L858.7,319.2M840.5,289.2L860.8,317.7M842.2,288.0L862.9,316.2M843.8,286.7L864.9,314.7M845.5,285.5L867.0,313.1M847.1,284.2L869.0,311.5M848.7,282.9L871.0,309.9M850.3,281.6L872.9,308.3M851.8,280.2L874.9,306.6M853.4,278.9L876.8,304.9M854.9,277.5L878.7,303.2M856.4,276.1L880.5,301.4M857.9,274.7L882.4,299.7M859.4,273.2L884.2,297.9M860.8,271.7L886.0,296.0M862.2,270.2L887.7,294.2M863.6,268.7L889.5,292.3M865.0,267.2L891.2,290.4M866.4,265.6L892.9,288.5M867.7,264.1L894.5,286.5M869.0,262.5L896.2,284.6M870.3,260.9L897.8,282.6M871.6,259.3L899.3,280.6M872.8,257.6L900.9,278.5M874.0,255.9L902.4,276.5M875.2,254.3L903.9,274.4M876.4,252.6L905.3,272.3M877.5,250.9L906.7,270.1M878.6,249.1L908.1,268.0M879.7,247.4L909.5,265.8M880.8,245.6L910.8,263.6M881.9,243.9L912.1,261.4M882.9,242.1L913.4,259.2M883.9,240.3L914.6,257.0M884.9,238.4L915.8,254.7M885.8,236.6L917.0,252.5M886.7,234.8L918.2,250.2M887.6,232.9L919.3,247.9M888.5,231.0L920.3,245.5M889.3,229.2L921.4,243.2M890.1,227.3L922.4,240.9M890.9,225.4L923.4,238.5M891.7,223.5L924.3,236.1M892.4,221.5L925.2,233.7M893.1,219.6L926.1,231.3M893.8,217.6L926.9,228.9M894.4,215.7L927.7,226.5M895.1,213.7L928.5,224.0M895.7,211.8L929.2,221.6M896.2,209.8L929.9,219.1M896.8,207.8L930.6,216.7M582.4,216.5L548.5,225.4M583.0,218.8L549.2,228.0M583.6,221.0L550.0,230.7M584.2,223.2L550.7,233.3M584.9,225.4L551.6,236.0M585.6,227.6L552.4,238.6M586.4,229.8L553.3,241.2M587.1,232.0L554.2,243.8M587.9,234.1L555.2,246.4M588.8,236.3L556.1,249.0M589.6,238.4L557.2,251.5M590.5,240.6L558.2,254.1M591.4,242.7L559.3,256.6M592.3,244.8L560.4,259.2M593.3,246.9L561.6,261.7M594.3,249.0L562.7,264.2M595.3,251.1L563.9,266.6M596.3,253.1L565.2,269.1M597.4,255.2L566.5,271.6M598.5,257.2L567.8,274.0M599.6,259.2L569.1,276.4M600.8,261.2L570.5,278.8M601.9,263.2L571.9,281.2M603.1,265.2L573.3,283.5M604.3,267.2L574.8,285.9M605.6,269.1L576.2,288.2M606.9,271.0L577.8,290.5M608.2,273.0L579.3,292.8M609.5,274.8L580.9,295.0M610.8,276.7L582.5,297.3M612.2,278.6L584.1,299.5M613.6,280.4L585.8,301.7M615.0,282.3L587.5,303.9M616.4,284.1L589.2,306.0M617.9,285.8L590.9,308.2M619.4,287.6L592.7,310.3M620.9,289.4L594.5,312.4M622.4,291.1L596.3,314.4M624.0,292.8L598.2,316.5M625.5,294.5L600.1,318.5M627.1,296.2L602.0,320.5M628.8,297.8L603.9,322.5M630.4,299.4L605.9,324.4M632.1,301.0L607.9,326.3M633.7,302.6L609.9,328.2M635.4,304.2L611.9,330.1M637.1,305.7L613.9,331.9M638.9,307.3L616.0,333.8M640.6,308.8L618.1,335.5M642.4,310.2L620.2,337.3M644.2,311.7L622.4,339.0M646.0,313.1L624.6,340.7M647.9,314.5L626.7,342.4M649.7,315.9L629.0,344.1M651.6,317.3L631.2,345.7M653.5,318.6L633.4,347.3M655.4,319.9L635.7,348.9M657.3,321.2L638.0,350.4M659.2,322.5L640.3,351.9M661.2,323.7L642.6,353.4M663.1,324.9L645.0,354.8M665.1,326.1L647.4,356.2M667.1,327.2L649.7,357.6M669.1,328.4L652.1,359.0M671.2,329.5L654.6,360.3M673.2,330.6L657.0,361.6M675.3,331.6L659.5,362.9M677.3,332.7L661.9,364.1M679.4,333.7L664.4,365.3M681.5,334.6L666.9,366.4M683.6,335.6L669.4,367.6M685.7,336.5L672.0,368.7M687.8,337.4L674.5,369.7M690.0,338.3L677.1,370.8M692.1,339.1L679.6,371.8M694.3,339.9L682.2,372.8M696.5,340.7L684.8,373.7M698.7,341.5L687.4,374.6M700.8,342.2L690.0,375.5M703.0,342.9L692.7,376.3M705.3,343.6L695.3,377.1M707.5,344.2L697.9,377.9M709.7,344.8L700.6,378.6M711.9,345.4L703.3,379.3M714.2,346.0L705.9,380.0M716.4,346.5L708.6,380.6M718.7,347.0L711.3,381.2M720.9,347.5L714.0,381.8M723.2,347.9L716.7,382.3M725.5,348.3L719.4,382.8M727.8,348.7L722.2,383.2M730.0,349.0L724.9,383.7M732.3,349.4L727.6,384.1M734.6,349.7L730.4,384.4M736.9,349.9L733.1,384.7M739.2,350.2L735.8,385.0M741.5,350.4L738.6,385.3M743.8,350.6L741.3,385.5M746.1,350.7L744.1,385.6M748.4,350.8L746.8,385.8M750.7,350.9L749.6,385.9M753.0,351.0L752.4,386.0M755.3,351.0L755.1,386.0M757.7,351.0L757.9,386.0M760.0,351.0L760.6,386.0M762.3,350.9L763.4,385.9M764.6,350.8L766.2,385.8M766.9,350.7L768.9,385.6M769.2,350.6L771.7,385.5M771.5,350.4L774.4,385.3M773.8,350.2L777.2,385.0M776.1,349.9L779.9,384.7M778.4,349.7L782.6,384.4M780.7,349.4L785.4,384.1M783.0,349.0L788.1,383.7M785.2,348.7L790.8,383.2M787.5,348.3L793.6,382.8M789.8,347.9L796.3,382.3M792.1,347.5L799.0,381.8M794.3,347.0L801.7,381.2M796.6,346.5L804.4,380.6M798.8,346.0L807.1,380.0M801.1,345.4L809.7,379.3M803.3,344.8L812.4,378.6M805.5,344.2L815.1,377.9M807.7,343.6L817.7,377.1M810.0,342.9L820.3,376.3M812.2,342.2L823.0,375.5M814.3,341.5L825.6,374.6M816.5,340.7L828.2,373.7M818.7,339.9L830.8,372.8M820.9,339.1L833.4,371.8M823.0,338.3L835.9,370.8M825.2,337.4L838.5,369.7M827.3,336.5L841.0,368.7M829.4,335.6L843.6,367.6M831.5,334.6L846.1,366.4M833.6,333.7L848.6,365.3M835.7,332.7L851.1,364.1M837.7,331.6L853.5,362.9M839.8,330.6L856.0,361.6M841.8,329.5L858.4,360.3M843.9,328.4L860.9,359.0M845.9,327.2L863.3,357.6M847.9,326.1L865.6,356.2M849.9,324.9L868.0,354.8M851.8,323.7L870.4,353.4M853.8,322.5L872.7,351.9M855.7,321.2L875.0,350.4M857.6,319.9L877.3,348.9M859.5,318.6L879.6,347.3M861.4,317.3L881.8,345.7M863.3,315.9L884.0,344.1M865.1,314.5L886.3,342.4M867.0,313.1L888.4,340.7M868.8,311.7L890.6,339.0M870.6,310.2L892.8,337.3M872.4,308.8L894.9,335.5M874.1,307.3L897.0,333.8M875.9,305.7L899.1,331.9M877.6,304.2L901.1,330.1M879.3,302.6L903.1,328.2M880.9,301.0L905.1,326.3M882.6,299.4L907.1,324.4M884.2,297.8L909.1,322.5M885.9,296.2L911.0,320.5M887.5,294.5L912.9,318.5M889.0,292.8L914.8,316.5M890.6,291.1L916.7,314.4M892.1,289.4L918.5,312.4M893.6,287.6L920.3,310.3M895.1,285.8L922.1,308.2M896.6,284.1L923.8,306.0M898.0,282.3L925.5,303.9M899.4,280.4L927.2,301.7M900.8,278.6L928.9,299.5M902.2,276.7L930.5,297.3M903.5,274.8L932.1,295.0M904.8,273.0L933.7,292.8M906.1,271.0L935.2,290.5M907.4,269.1L936.8,288.2M908.7,267.2L938.2,285.9M909.9,265.2L939.7,283.5M911.1,263.2L941.1,281.2M912.2,261.2L942.5,278.8M913.4,259.2L943.9,276.4M914.5,257.2L945.2,274.0M915.6,255.2L946.5,271.6M916.7,253.1L947.8,269.1M917.7,251.1L949.1,266.6M918.7,249.0L950.3,264.2M919.7,246.9L951.4,261.7M920.7,244.8L952.6,259.2M921.6,242.7L953.7,256.6M922.5,240.6L954.8,254.1M923.4,238.4L955.8,251.5M924.2,236.3L956.9,249.0M925.1,234.1L957.8,246.4M925.9,232.0L958.8,243.8M926.6,229.8L959.7,241.2M927.4,227.6L960.6,238.6M928.1,225.4L961.4,236.0M928.8,223.2L962.3,233.3M929.4,221.0L963.0,230.7M930.0,218.8L963.8,228.0M930.6,216.5L964.5,225.4M548.1,223.7L514.1,232.3M548.7,226.2L514.9,235.2M549.4,228.6L515.7,238.0M550.1,231.1L516.5,240.9M550.8,233.5L517.3,243.7M551.6,236.0L518.2,246.6M552.3,238.4L519.1,249.4M553.2,240.8L520.1,252.2M554.0,243.2L521.0,255.0M554.9,245.6L522.0,257.8M555.8,248.0L523.1,260.6M556.7,250.4L524.2,263.3M557.7,252.8L525.3,266.1M558.6,255.1L526.4,268.8M559.6,257.5L527.6,271.5M560.7,259.8L528.8,274.2M561.8,262.1L530.1,276.9M562.9,264.4L531.3,279.6M564.0,266.7L532.6,282.3M565.1,269.0L534.0,284.9M566.3,271.2L535.3,287.6M567.5,273.5L536.7,290.2M568.7,275.7L538.2,292.8M570.0,277.9L539.6,295.4M571.3,280.2L541.1,297.9M572.6,282.3L542.6,300.5M573.9,284.5L544.2,303.0M575.3,286.7L545.8,305.5M576.7,288.8L547.4,308.0M578.1,290.9L549.0,310.5M579.5,293.1L550.7,312.9M581.0,295.1L552.4,315.4M582.4,297.2L554.1,317.8M584.0,299.3L555.9,320.2M585.5,301.3L557.7,322.5M587.1,303.3L559.5,324.9M588.6,305.3L561.3,327.2M590.2,307.3L563.2,329.5M591.9,309.3L565.1,331.8M593.5,311.2L567.0,334.1M595.2,313.1L568.9,336.3M596.9,315.1L570.9,338.5M598.6,316.9L572.9,340.7M600.4,318.8L574.9,342.9M602.1,320.6L577.0,345.0M603.9,322.5L579.1,347.1M605.7,324.3L581.2,349.2M607.5,326.0L583.3,351.3M609.4,327.8L585.4,353.3M611.3,329.5L587.6,355.3M613.2,331.2L589.8,357.3M615.1,332.9L592.0,359.3M617.0,334.6L594.3,361.2M619.0,336.2L596.6,363.1M620.9,337.9L598.9,365.0M622.9,339.5L601.2,366.9M624.9,341.0L603.5,368.7M626.9,342.6L605.9,370.5M629.0,344.1L608.2,372.3M631.1,345.6L610.6,374.0M633.1,347.1L613.1,375.8M635.2,348.5L615.5,377.4M637.4,350.0L618.0,379.1M639.5,351.4L620.4,380.7M641.6,352.7L622.9,382.3M643.8,354.1L625.4,383.9M646.0,355.4L628.0,385.4M648.2,356.7L630.5,386.9M650.4,358.0L633.1,388.4M652.6,359.2L635.7,389.9M654.9,360.5L638.3,391.3M657.1,361.6L640.9,392.7M659.4,362.8L643.6,394.0M661.7,364.0L646.2,395.4M664.0,365.1L648.9,396.7M666.3,366.1L651.6,397.9M668.6,367.2L654.3,399.1M670.9,368.2L657.0,400.3M673.3,369.2L659.7,401.5M675.6,370.2L662.5,402.6M678.0,371.2L665.2,403.7M680.4,372.1L668.0,404.8M682.8,373.0L670.8,405.8M685.2,373.8L673.6,406.8M687.6,374.7L676.4,407.8M690.0,375.5L679.2,408.7M692.4,376.2L682.0,409.6M694.9,377.0L684.8,410.5M697.3,377.7L687.7,411.3M699.8,378.4L690.5,412.1M702.2,379.0L693.4,412.9M704.7,379.7L696.3,413.6M707.2,380.3L699.2,414.3M709.7,380.8L702.1,415.0M712.2,381.4L705.0,415.6M714.7,381.9L707.9,416.2M717.2,382.4L710.8,416.8M719.7,382.8L713.7,417.3M722.2,383.2L716.6,417.8M724.7,383.6L719.6,418.3M727.3,384.0L722.5,418.7M729.8,384.3L725.4,419.1M732.3,384.6L728.4,419.4M734.9,384.9L731.3,419.7M737.4,385.1L734.3,420.0M739.9,385.4L737.2,420.3M742.5,385.5L740.2,420.5M745.0,385.7L743.2,420.6M747.6,385.8L746.1,420.8M750.1,385.9L749.1,420.9M752.7,386.0L752.1,421.0M755.2,386.0L755.0,421.0M757.8,386.0L758.0,421.0M760.3,386.0L760.9,421.0M762.9,385.9L763.9,420.9M765.4,385.8L766.9,420.8M768.0,385.7L769.8,420.6M770.5,385.5L772.8,420.5M773.1,385.4L775.8,420.3M775.6,385.1L778.7,420.0M778.1,384.9L781.7,419.7M780.7,384.6L784.6,419.4M783.2,384.3L787.6,419.1M785.7,384.0L790.5,418.7M788.3,383.6L793.4,418.3M790.8,383.2L796.4,417.8M793.3,382.8L799.3,417.3M795.8,382.4L802.2,416.8M798.3,381.9L805.1,416.2M800.8,381.4L808.0,415.6M803.3,380.8L810.9,415.0M805.8,380.3L813.8,414.3M808.3,379.7L816.7,413.6M810.8,379.0L819.6,412.9M813.2,378.4L822.5,412.1M815.7,377.7L825.3,411.3M818.1,377.0L828.2,410.5M820.6,376.2L831.0,409.6M823.0,375.5L833.8,408.7M825.4,374.7L836.6,407.8M827.8,373.8L839.4,406.8M830.2,373.0L842.2,405.8M832.6,372.1L845.0,404.8M835.0,371.2L847.8,403.7M837.4,370.2L850.5,402.6M839.7,369.2L853.3,401.5M842.1,368.2L856.0,400.3M844.4,367.2L858.7,399.1M846.7,366.1L861.4,397.9M849.0,365.1L864.1,396.7M851.3,364.0L866.8,395.4M853.6,362.8L869.4,394.0M855.9,361.6L872.1,392.7M858.1,360.5L874.7,391.3M860.4,359.2L877.3,389.9M862.6,358.0L879.9,388.4M864.8,356.7L882.5,386.9M867.0,355.4L885.0,385.4M869.2,354.1L887.6,383.9M871.4,352.7L890.1,382.3M873.5,351.4L892.6,380.7M875.6,350.0L895.0,379.1M877.8,348.5L897.5,377.4M879.9,347.1L899.9,375.8M881.9,345.6L902.4,374.0M884.0,344.1L904.8,372.3M886.1,342.6L907.1,370.5M888.1,341.0L909.5,368.7M890.1,339.5L911.8,366.9M892.1,337.9L914.1,365.0M894.0,336.2L916.4,363.1M896.0,334.6L918.7,361.2M897.9,332.9L921.0,359.3M899.8,331.2L923.2,357.3M901.7,329.5L925.4,355.3M903.6,327.8L927.6,353.3M905.5,326.0L929.7,351.3M907.3,324.3L931.8,349.2M909.1,322.5L933.9,347.1M910.9,320.6L936.0,345.0M912.6,318.8L938.1,342.9M914.4,316.9L940.1,340.7M916.1,315.1L942.1,338.5M917.8,313.1L944.1,336.3M919.5,311.2L946.0,334.1M921.1,309.3L947.9,331.8M922.8,307.3L949.8,329.5M924.4,305.3L951.7,327.2M925.9,303.3L953.5,324.9M927.5,301.3L955.3,322.5M929.0,299.3L957.1,320.2M930.6,297.2L958.9,317.8M932.0,295.1L960.6,315.4M933.5,293.1L962.3,312.9M934.9,290.9L964.0,310.5M936.3,288.8L965.6,308.0M937.7,286.7L967.2,305.5M939.1,284.5L968.8,303.0M940.4,282.3L970.4,300.5M941.7,280.2L971.9,297.9M943.0,277.9L973.4,295.4M944.3,275.7L974.8,292.8M945.5,273.5L976.3,290.2M946.7,271.2L977.7,287.6M947.9,269.0L979.0,284.9M949.0,266.7L980.4,282.3M950.1,264.4L981.7,279.6M951.2,262.1L982.9,276.9M952.3,259.8L984.2,274.2M953.4,257.5L985.4,271.5M954.4,255.1L986.6,268.8M955.3,252.8L987.7,266.1M956.3,250.4L988.8,263.3M957.2,248.0L989.9,260.6M958.1,245.6L991.0,257.8M959.0,243.2L992.0,255.0M959.8,240.8L992.9,252.2M960.7,238.4L993.9,249.4M961.4,236.0L994.8,246.6M962.2,233.5L995.7,243.7M962.9,231.1L996.5,240.9M963.6,228.6L997.3,238.0M964.3,226.2L998.1,235.2M964.9,223.7L998.9,232.3M514.5,233.9L475.8,243.9M515.2,236.5L476.6,247.0M516.0,239.2L477.5,250.1M516.8,241.9L478.4,253.2M517.6,244.5L479.3,256.3M518.4,247.2L480.3,259.4M519.3,249.8L481.3,262.4M520.1,252.5L482.3,265.5M521.1,255.1L483.4,268.5M522.0,257.7L484.5,271.6M523.0,260.3L485.6,274.6M524.0,262.9L486.8,277.6M525.0,265.5L488.0,280.6M526.1,268.0L489.2,283.6M527.2,270.6L490.5,286.5M528.3,273.1L491.8,289.5M529.5,275.7L493.1,292.4M530.6,278.2L494.5,295.3M531.8,280.7L495.9,298.2M533.1,283.2L497.3,301.1M534.3,285.6L498.8,304.0M535.6,288.1L500.3,306.8M536.9,290.5L501.8,309.7M538.3,293.0L503.4,312.5M539.6,295.4L504.9,315.3M541.0,297.8L506.6,318.1M542.5,300.2L508.2,320.8M543.9,302.6L509.9,323.6M545.4,304.9L511.6,326.3M546.9,307.2L513.3,329.0M548.4,309.6L515.1,331.7M550.0,311.9L516.9,334.4M551.5,314.2L518.7,337.1M553.1,316.4L520.6,339.7M554.8,318.7L522.5,342.3M556.4,320.9L524.4,344.9M558.1,323.1L526.4,347.5M559.8,325.3L528.3,350.0M561.5,327.5L530.3,352.5M563.3,329.6L532.4,355.0M565.1,331.8L534.4,357.5M566.9,333.9L536.5,360.0M568.7,336.0L538.6,362.4M570.5,338.1L540.8,364.8M572.4,340.1L542.9,367.2M574.3,342.2L545.1,369.5M576.2,344.2L547.3,371.9M578.1,346.2L549.6,374.2M580.1,348.1L551.9,376.5M582.1,350.1L554.2,378.7M584.1,352.0L556.5,381.0M586.1,353.9L558.8,383.2M588.1,355.8L561.2,385.4M590.2,357.7L563.6,387.5M592.3,359.5L566.0,389.7M594.4,361.3L568.4,391.8M596.5,363.1L570.9,393.8M598.7,364.9L573.4,395.9M600.8,366.6L575.9,397.9M603.0,368.3L578.4,399.9M605.2,370.0L581.0,401.9M607.4,371.7L583.6,403.8M609.7,373.3L586.2,405.7M611.9,375.0L588.8,407.6M614.2,376.5L591.4,409.4M616.5,378.1L594.1,411.3M618.8,379.7L596.8,413.0M621.1,381.2L599.5,414.8M623.5,382.7L602.2,416.5M625.8,384.1L604.9,418.2M628.2,385.6L607.7,419.9M630.6,387.0L610.5,421.5M633.0,388.4L613.2,423.1M635.4,389.7L616.1,424.7M637.9,391.1L618.9,426.3M640.3,392.4L621.7,427.8M642.8,393.6L624.6,429.3M645.3,394.9L627.5,430.7M647.8,396.1L630.4,432.1M650.3,397.3L633.3,433.5M652.8,398.5L636.2,434.9M655.3,399.6L639.1,436.2M657.9,400.7L642.1,437.5M660.4,401.8L645.1,438.7M663.0,402.9L648.0,440.0M665.6,403.9L651.0,441.1M668.2,404.9L654.0,442.3M670.8,405.8L657.1,443.4M673.4,406.8L660.1,444.5M676.0,407.7L663.1,445.6M678.6,408.6L666.2,446.6M681.3,409.4L669.3,447.6M683.9,410.2L672.3,448.5M686.6,411.0L675.4,449.4M689.3,411.8L678.5,450.3M692.0,412.5L681.6,451.2M694.6,413.2L684.8,452.0M697.3,413.9L687.9,452.8M700.0,414.5L691.0,453.5M702.8,415.2L694.2,454.2M705.5,415.7L697.3,454.9M708.2,416.3L700.5,455.5M710.9,416.8L703.6,456.1M713.7,417.3L706.8,456.7M716.4,417.8L710.0,457.2M719.1,418.2L713.2,457.7M721.9,418.6L716.4,458.2M724.6,419.0L719.5,458.6M727.4,419.3L722.7,459.0M730.2,419.6L725.9,459.4M732.9,419.9L729.2,459.7M735.7,420.1L732.4,460.0M738.5,420.3L735.6,460.2M741.2,420.5L738.8,460.5M744.0,420.7L742.0,460.6M746.8,420.8L745.2,460.8M749.6,420.9L748.4,460.9M752.3,421.0L751.7,461.0M755.1,421.0L754.9,461.0M757.9,421.0L758.1,461.0M760.7,421.0L761.3,461.0M763.4,420.9L764.6,460.9M766.2,420.8L767.8,460.8M769.0,420.7L771.0,460.6M771.8,420.5L774.2,460.5M774.5,420.3L777.4,460.2M777.3,420.1L780.6,460.0M780.1,419.9L783.8,459.7M782.8,419.6L787.1,459.4M785.6,419.3L790.3,459.0M788.4,419.0L793.5,458.6M791.1,418.6L796.6,458.2M793.9,418.2L799.8,457.7M796.6,417.8L803.0,457.2M799.3,417.3L806.2,456.7M802.1,416.8L809.4,456.1M804.8,416.3L812.5,455.5M807.5,415.7L815.7,454.9M810.2,415.2L818.8,454.2M813.0,414.5L822.0,453.5M815.7,413.9L825.1,452.8M818.4,413.2L828.2,452.0M821.0,412.5L831.4,451.2M823.7,411.8L834.5,450.3M826.4,411.0L837.6,449.4M829.1,410.2L840.7,448.5M831.7,409.4L843.7,447.6M834.4,408.6L846.8,446.6M837.0,407.7L849.9,445.6M839.6,406.8L852.9,444.5M842.2,405.8L855.9,443.4M844.8,404.9L859.0,442.3M847.4,403.9L862.0,441.1M850.0,402.9L865.0,440.0M852.6,401.8L867.9,438.7M855.1,400.7L870.9,437.5M857.7,399.6L873.9,436.2M860.2,398.5L876.8,434.9M862.7,397.3L879.7,433.5M865.2,396.1L882.6,432.1M867.7,394.9L885.5,430.7M870.2,393.6L888.4,429.3M872.7,392.4L891.3,427.8M875.1,391.1L894.1,426.3M877.6,389.7L896.9,424.7M880.0,388.4L899.8,423.1M882.4,387.0L902.5,421.5M884.8,385.6L905.3,419.9M887.2,384.1L908.1,418.2M889.5,382.7L910.8,416.5M891.9,381.2L913.5,414.8M894.2,379.7L916.2,413.0M896.5,378.1L918.9,411.3M898.8,376.5L921.6,409.4M901.1,375.0L924.2,407.6M903.3,373.3L926.8,405.7M905.6,371.7L929.4,403.8M907.8,370.0L932.0,401.9M910.0,368.3L934.6,399.9M912.2,366.6L937.1,397.9M914.3,364.9L939.6,395.9M916.5,363.1L942.1,393.8M918.6,361.3L944.6,391.8M920.7,359.5L947.0,389.7M922.8,357.7L949.4,387.5M924.9,355.8L951.8,385.4M926.9,353.9L954.2,383.2M928.9,352.0L956.5,381.0M930.9,350.1L958.8,378.7M932.9,348.1L961.1,376.5M934.9,346.2L963.4,374.2M936.8,344.2L965.7,371.9M938.7,342.2L967.9,369.5M940.6,340.1L970.1,367.2M942.5,338.1L972.2,364.8M944.3,336.0L974.4,362.4M946.1,333.9L976.5,360.0M947.9,331.8L978.6,357.5M949.7,329.6L980.6,355.0M951.5,327.5L982.7,352.5M953.2,325.3L984.7,350.0M954.9,323.1L986.6,347.5M956.6,320.9L988.6,344.9M958.2,318.7L990.5,342.3M959.9,316.4L992.4,339.7M961.5,314.2L994.3,337.1M963.0,311.9L996.1,334.4M964.6,309.6L997.9,331.7M966.1,307.2L999.7,329.0M967.6,304.9L1001.4,326.3M969.1,302.6L1003.1,323.6M970.5,300.2L1004.8,320.8M972.0,297.8L1006.4,318.1M973.4,295.4L1008.1,315.3M974.7,293.0L1009.6,312.5M976.1,290.5L1011.2,309.7M977.4,288.1L1012.7,306.8M978.7,285.6L1014.2,304.0M979.9,283.2L1015.7,301.1M981.2,280.7L1017.1,298.2M982.4,278.2L1018.5,295.3M983.5,275.7L1019.9,292.4M984.7,273.1L1021.2,289.5M985.8,270.6L1022.5,286.5M986.9,268.0L1023.8,283.6M988.0,265.5L1025.0,280.6M989.0,262.9L1026.2,277.6M990.0,260.3L1027.4,274.6M991.0,257.7L1028.5,271.6M991.9,255.1L1029.6,268.5M992.9,252.5L1030.7,265.5M993.7,249.8L1031.7,262.4M994.6,247.2L1032.7,259.4M995.4,244.5L1033.7,256.3M996.2,241.9L1034.6,253.2M997.0,239.2L1035.5,250.1M997.8,236.5L1036.4,247.0M998.5,233.9L1037.2,243.9M475.5,242.7L339.9,277.4M476.1,245.1L340.8,280.8M476.7,247.4L341.7,284.3M477.4,249.7L342.7,287.7M478.1,252.1L343.6,291.2M478.7,254.4L344.7,294.6M479.4,256.7L345.7,298.1M480.2,259.0L346.8,301.5M480.9,261.3L347.9,304.9M481.7,263.6L349.0,308.3M482.5,265.9L350.2,311.7M483.3,268.2L351.3,315.1M484.1,270.4L352.6,318.4M484.9,272.7L353.8,321.8M485.8,275.0L355.1,325.1M486.6,277.2L356.4,328.5M487.5,279.5L357.7,331.8M488.5,281.7L359.1,335.1M489.4,283.9L360.4,338.4M490.3,286.1L361.8,341.7M491.3,288.4L363.3,345.0M492.3,290.6L364.7,348.3M493.3,292.8L366.2,351.5M494.3,294.9L367.8,354.8M495.4,297.1L369.3,358.0M496.4,299.3L370.9,361.2M497.5,301.5L372.5,364.4M498.6,303.6L374.1,367.6M499.7,305.8L375.7,370.8M500.8,307.9L377.4,374.0M502.0,310.0L379.1,377.1M503.2,312.1L380.9,380.3M504.3,314.2L382.6,383.4M505.6,316.3L384.4,386.5M506.8,318.4L386.2,389.6M508.0,320.5L388.0,392.7M509.3,322.6L389.9,395.7M510.5,324.6L391.8,398.8M511.8,326.7L393.7,401.8M513.1,328.7L395.6,404.8M514.5,330.7L397.6,407.8M515.8,332.7L399.6,410.8M517.1,334.7L401.6,413.8M518.5,336.7L403.6,416.7M519.9,338.7L405.7,419.7M521.3,340.7L407.8,422.6M522.7,342.6L409.9,425.5M524.2,344.6L412.0,428.4M525.6,346.5L414.2,431.2M527.1,348.4L416.4,434.1M528.6,350.3L418.6,436.9M530.1,352.2L420.8,439.7M531.6,354.1L423.0,442.5M533.1,356.0L425.3,445.3M534.7,357.8L427.6,448.0M536.3,359.7L429.9,450.7M537.8,361.5L432.3,453.4M539.4,363.3L434.6,456.1M541.0,365.1L437.0,458.8M542.7,366.9L439.4,461.5M544.3,368.7L441.9,464.1M546.0,370.4L444.3,466.7M547.6,372.2L446.8,469.3M549.3,373.9L449.3,471.9M551.0,375.6L451.8,474.4M552.7,377.3L454.3,476.9M554.4,379.0L456.9,479.5M556.2,380.7L459.5,481.9M557.9,382.4L462.1,484.4M559.7,384.0L464.7,486.8M561.5,385.6L467.4,489.3M563.3,387.3L470.0,491.7M565.1,388.9L472.7,494.0M566.9,390.5L475.4,496.4M568.8,392.0L478.1,498.7M570.6,393.6L480.9,501.0M572.5,395.1L483.6,503.3M574.3,396.6L486.4,505.6M576.2,398.2L489.2,507.8M578.1,399.7L492.0,510.0M580.0,401.1L494.8,512.2M582.0,402.6L497.7,514.4M583.9,404.0L500.6,516.5M585.8,405.5L503.5,518.7M587.8,406.9L506.4,520.8M589.8,408.3L509.3,522.8M591.8,409.7L512.2,524.9M593.8,411.0L515.2,526.9M595.8,412.4L518.2,528.9M597.8,413.7L521.1,530.9M599.8,415.0L524.2,532.8M601.8,416.3L527.2,534.7M603.9,417.6L530.2,536.6M606.0,418.9L533.3,538.5M608.0,420.1L536.3,540.4M610.1,421.3L539.4,542.2M612.2,422.5L542.5,544.0M614.3,423.7L545.6,545.8M616.4,424.9L548.8,547.5M618.5,426.1L551.9,549.2M620.7,427.2L555.1,550.9M622.8,428.3L558.3,552.6M624.9,429.4L561.4,554.2M627.1,430.5L564.6,555.8M629.3,431.6L567.9,557.4M631.4,432.7L571.1,559.0M633.6,433.7L574.3,560.5M635.8,434.7L577.6,562.0M638.0,435.7L580.8,563.5M640.2,436.7L584.1,564.9M642.5,437.6L587.4,566.4M644.7,438.6L590.7,567.8M646.9,439.5L594.0,569.1M649.2,440.4L597.3,570.5M651.4,441.3L600.7,571.8M653.7,442.2L604.0,573.1M655.9,443.0L607.4,574.3M658.2,443.8L610.7,575.5M660.5,444.6L614.1,576.7M662.8,445.4L617.5,577.9M665.0,446.2L620.9,579.1M667.3,447.0L624.3,580.2M669.6,447.7L627.7,581.3M672.0,448.4L631.1,582.3M674.3,449.1L634.6,583.4M676.6,449.8L638.0,584.4M678.9,450.4L641.5,585.3M681.2,451.1L644.9,586.3M683.6,451.7L648.4,587.2M685.9,452.3L651.9,588.1M688.3,452.9L655.3,588.9M690.6,453.4L658.8,589.8M693.0,454.0L662.3,590.6M695.3,454.5L665.8,591.3M697.7,455.0L669.3,592.1M700.1,455.5L672.8,592.8M702.4,455.9L676.3,593.5M704.8,456.4L679.9,594.1M707.2,456.8L683.4,594.7M709.6,457.2L686.9,595.3M712.0,457.6L690.5,595.9M714.4,457.9L694.0,596.4M716.8,458.3L697.6,596.9M719.1,458.6L701.1,597.4M721.5,458.9L704.7,597.9M723.9,459.2L708.2,598.3M726.3,459.4L711.8,598.7M728.8,459.7L715.4,599.0M731.2,459.9L718.9,599.4M733.6,460.1L722.5,599.7M736.0,460.3L726.1,599.9M738.4,460.4L729.6,600.2M740.8,460.6L733.2,600.4M743.2,460.7L736.8,600.5M745.6,460.8L740.4,600.7M748.0,460.9L744.0,600.8M750.5,460.9L747.5,600.9M752.9,461.0L751.1,601.0M755.3,461.0L754.7,601.0M757.7,461.0L758.3,601.0M760.1,461.0L761.9,601.0M762.5,460.9L765.5,600.9M765.0,460.9L769.0,600.8M767.4,460.8L772.6,600.7M769.8,460.7L776.2,600.5M772.2,460.6L779.8,600.4M774.6,460.4L783.4,600.2M777.0,460.3L786.9,599.9M779.4,460.1L790.5,599.7M781.8,459.9L794.1,599.4M784.2,459.7L797.6,599.0M786.7,459.4L801.2,598.7M789.1,459.2L804.8,598.3M791.5,458.9L808.3,597.9M793.9,458.6L811.9,597.4M796.2,458.3L815.4,596.9M798.6,457.9L819.0,596.4M801.0,457.6L822.5,595.9M803.4,457.2L826.1,595.3M805.8,456.8L829.6,594.7M808.2,456.4L833.1,594.1M810.6,455.9L836.7,593.5M812.9,455.5L840.2,592.8M815.3,455.0L843.7,592.1M817.7,454.5L847.2,591.3M820.0,454.0L850.7,590.6M822.4,453.4L854.2,589.8M824.7,452.9L857.7,588.9M827.1,452.3L861.1,588.1M829.4,451.7L864.6,587.2M831.8,451.1L868.1,586.3M834.1,450.4L871.5,585.3M836.4,449.8L875.0,584.4M838.7,449.1L878.4,583.4M841.0,448.4L881.9,582.3M843.4,447.7L885.3,581.3M845.7,447.0L888.7,580.2M848.0,446.2L892.1,579.1M850.2,445.4L895.5,577.9M852.5,444.6L898.9,576.7M854.8,443.8L902.3,575.5M857.1,443.0L905.6,574.3M859.3,442.2L909.0,573.1M861.6,441.3L912.3,571.8M863.8,440.4L915.7,570.5M866.1,439.5L919.0,569.1M868.3,438.6L922.3,567.8M870.5,437.6L925.6,566.4M872.8,436.7L928.9,564.9M875.0,435.7L932.2,563.5M877.2,434.7L935.4,562.0M879.4,433.7L938.7,560.5M881.6,432.7L941.9,559.0M883.7,431.6L945.1,557.4M885.9,430.5L948.4,555.8M888.1,429.4L951.6,554.2M890.2,428.3L954.7,552.6M892.3,427.2L957.9,550.9M894.5,426.1L961.1,549.2M896.6,424.9L964.2,547.5M898.7,423.7L967.4,545.8M900.8,422.5L970.5,544.0M902.9,421.3L973.6,542.2M905.0,420.1L976.7,540.4M907.0,418.9L979.7,538.5M909.1,417.6L982.8,536.6M911.2,416.3L985.8,534.7M913.2,415.0L988.8,532.8M915.2,413.7L991.9,530.9M917.2,412.4L994.8,528.9M919.2,411.0L997.8,526.9M921.2,409.7L1000.8,524.9M923.2,408.3L1003.7,522.8M925.2,406.9L1006.6,520.8M927.2,405.5L1009.5,518.7M929.1,404.0L1012.4,516.5M931.0,402.6L1015.3,514.4M933.0,401.1L1018.2,512.2M934.9,399.7L1021.0,510.0M936.8,398.2L1023.8,507.8M938.7,396.6L1026.6,505.6M940.5,395.1L1029.4,503.3M942.4,393.6L1032.1,501.0M944.2,392.0L1034.9,498.7M946.1,390.5L1037.6,496.4M947.9,388.9L1040.3,494.0M949.7,387.3L1043.0,491.7M951.5,385.6L1045.6,489.3M953.3,384.0L1048.3,486.8M955.1,382.4L1050.9,484.4M956.8,380.7L1053.5,481.9M958.6,379.0L1056.1,479.5M960.3,377.3L1058.7,476.9M962.0,375.6L1061.2,474.4M963.7,373.9L1063.7,471.9M965.4,372.2L1066.2,469.3M967.0,370.4L1068.7,466.7M968.7,368.7L1071.1,464.1M970.3,366.9L1073.6,461.5M972.0,365.1L1076.0,458.8M973.6,363.3L1078.4,456.1M975.2,361.5L1080.7,453.4M976.7,359.7L1083.1,450.7M978.3,357.8L1085.4,448.0M979.9,356.0L1087.7,445.3M981.4,354.1L1090.0,442.5M982.9,352.2L1092.2,439.7M984.4,350.3L1094.4,436.9M985.9,348.4L1096.6,434.1M987.4,346.5L1098.8,431.2M988.8,344.6L1101.0,428.4M990.3,342.6L1103.1,425.5M991.7,340.7L1105.2,422.6M993.1,338.7L1107.3,419.7M994.5,336.7L1109.4,416.7M995.9,334.7L1111.4,413.8M997.2,332.7L1113.4,410.8M998.5,330.7L1115.4,407.8M999.9,328.7L1117.4,404.8M1001.2,326.7L1119.3,401.8M1002.5,324.6L1121.2,398.8M1003.7,322.6L1123.1,395.7M1005.0,320.5L1125.0,392.7M1006.2,318.4L1126.8,389.6M1007.4,316.3L1128.6,386.5M1008.7,314.2L1130.4,383.4M1009.8,312.1L1132.1,380.3M1011.0,310.0L1133.9,377.1M1012.2,307.9L1135.6,374.0M1013.3,305.8L1137.3,370.8M1014.4,303.6L1138.9,367.6M1015.5,301.5L1140.5,364.4M1016.6,299.3L1142.1,361.2M1017.6,297.1L1143.7,358.0M1018.7,294.9L1145.2,354.8M1019.7,292.8L1146.8,351.5M1020.7,290.6L1148.3,348.3M1021.7,288.4L1149.7,345.0M1022.7,286.1L1151.2,341.7M1023.6,283.9L1152.6,338.4M1024.5,281.7L1153.9,335.1M1025.5,279.5L1155.3,331.8M1026.4,277.2L1156.6,328.5M1027.2,275.0L1157.9,325.1M1028.1,272.7L1159.2,321.8M1028.9,270.4L1160.4,318.4M1029.7,268.2L1161.7,315.1M1030.5,265.9L1162.8,311.7M1031.3,263.6L1164.0,308.3M1032.1,261.3L1165.1,304.9M1032.8,259.0L1166.2,301.5M1033.6,256.7L1167.3,298.1M1034.3,254.4L1168.3,294.6M1034.9,252.1L1169.4,291.2M1035.6,249.7L1170.3,287.7M1036.3,247.4L1171.3,284.3M1036.9,245.1L1172.2,280.8M1037.5,242.7L1173.1,277.4" fill="none" stroke="#0d1424" stroke-width="1.3"/>
</g>
<rect x="938.6" y="356.6" width="2.8" height="2.8" fill="#3a4a6a" stroke="#0f1628" stroke-width="1"/>
<rect x="941.6" y="364.6" width="2.8" height="2.8" fill="#3a4a6a" stroke="#0f1628" stroke-width="1"/>
<rect x="942.6" y="373.6" width="2.8" height="2.8" fill="#3a4a6a" stroke="#0f1628" stroke-width="1"/>
<rect x="940.6" y="382.6" width="2.8" height="2.8" fill="#3a4a6a" stroke="#0f1628" stroke-width="1"/>
<rect x="938.6" y="390.6" width="2.8" height="2.8" fill="#3a4a6a" stroke="#0f1628" stroke-width="1"/>
<rect x="696.3000000000001" y="232.5" width="2.8" height="2.8" fill="#3a4a6a" stroke="#0f1628" stroke-width="1"/>
<rect x="700.5" y="237.7" width="2.8" height="2.8" fill="#3a4a6a" stroke="#0f1628" stroke-width="1"/>
<rect x="704.6" y="237.7" width="2.8" height="2.8" fill="#3a4a6a" stroke="#0f1628" stroke-width="1"/>
<rect x="707.7" y="235.6" width="2.8" height="2.8" fill="#3a4a6a" stroke="#0f1628" stroke-width="1"/>
<rect x="733.7" y="252.29999999999998" width="2.8" height="2.8" fill="#3a4a6a" stroke="#0f1628" stroke-width="1"/>
<rect x="702.6" y="260.6" width="2.8" height="2.8" fill="#3a4a6a" stroke="#0f1628" stroke-width="1"/>
<rect x="711.9" y="259.6" width="2.8" height="2.8" fill="#3a4a6a" stroke="#0f1628" stroke-width="1"/>
<rect x="676.6" y="269.90000000000003" width="2.8" height="2.8" fill="#3a4a6a" stroke="#0f1628" stroke-width="1"/>
<rect x="680.7" y="268.90000000000003" width="2.8" height="2.8" fill="#3a4a6a" stroke="#0f1628" stroke-width="1"/>
<rect x="685.9" y="268.90000000000003" width="2.8" height="2.8" fill="#3a4a6a" stroke="#0f1628" stroke-width="1"/>
<rect x="676.6" y="283.40000000000003" width="2.8" height="2.8" fill="#3a4a6a" stroke="#0f1628" stroke-width="1"/>
<rect x="714.0" y="283.40000000000003" width="2.8" height="2.8" fill="#3a4a6a" stroke="#0f1628" stroke-width="1"/>
<rect x="735.8000000000001" y="267.90000000000003" width="2.8" height="2.8" fill="#3a4a6a" stroke="#0f1628" stroke-width="1"/>
<rect x="742.1" y="271.0" width="2.8" height="2.8" fill="#3a4a6a" stroke="#0f1628" stroke-width="1"/>
<rect x="829.4" y="248.1" width="2.8" height="2.8" fill="#3a4a6a" stroke="#0f1628" stroke-width="1"/>
<rect x="731.6" y="256.40000000000003" width="2.8" height="2.8" fill="#3a4a6a" stroke="#0f1628" stroke-width="1"/>
</svg>
</body></html>
